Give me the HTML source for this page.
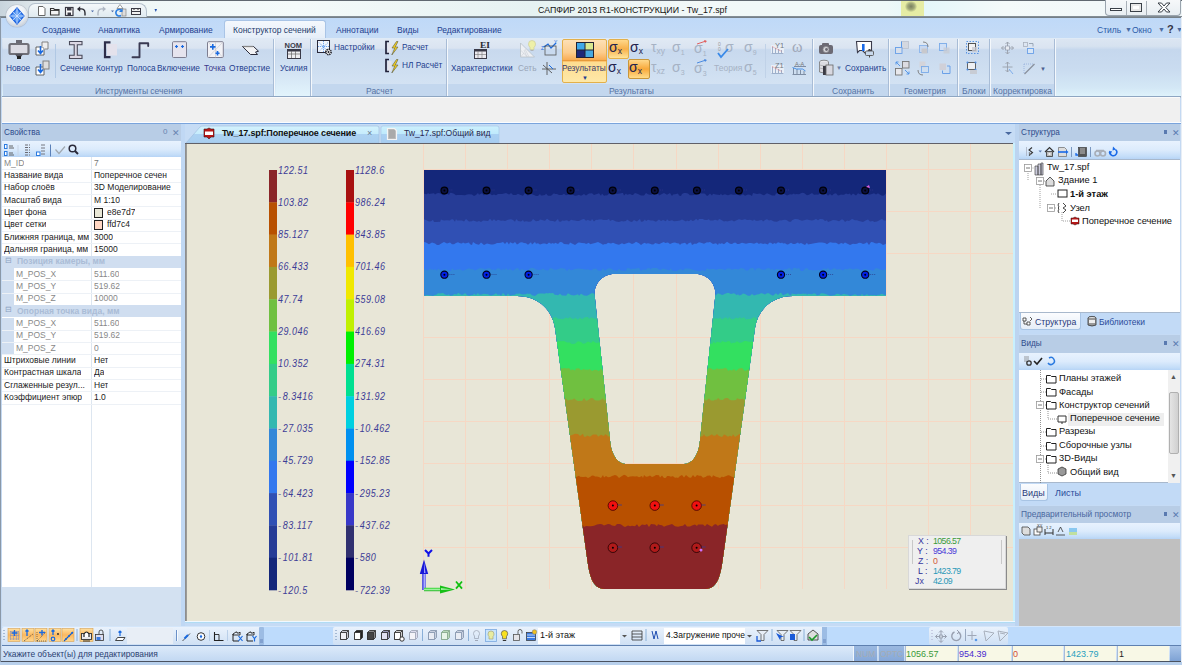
<!DOCTYPE html>
<html><head><meta charset="utf-8">
<style>
*{margin:0;padding:0;box-sizing:border-box}
html,body{width:1182px;height:665px;overflow:hidden;background:#c4d9f2;font-family:"Liberation Sans",sans-serif;font-size:10px;color:#1e3e8e}
.a{position:absolute}
.t{position:absolute;white-space:nowrap;line-height:1}
.rl{position:absolute;white-space:nowrap;line-height:1;font-size:8.3px;color:#1f3f8f}
.gl{position:absolute;white-space:nowrap;line-height:1;font-size:8.5px;color:#5673a4}
.grp{position:absolute;top:39px;height:57px;background:linear-gradient(#e0e9f4 0%,#dae4f1 16%,#c8d9ee 19%,#cfdff1 60%,#d8e6f5 100%);border-right:1px solid #a8bcd6;box-shadow:1px 0 0 #f4f8fc}
.grp .lb{position:absolute;left:0;right:0;bottom:0;height:12px;background:#c3d7ee}
.sep{position:absolute;width:1px;background:#b0c8e4}
.pr{position:absolute;left:2px;width:179px;height:12.3px;border-bottom:1px solid #e8eef6}
.pt{position:absolute;white-space:nowrap;line-height:1;font-size:8.5px;color:#101010}
.sc{position:absolute;white-space:nowrap;line-height:1;font-size:11px;font-style:italic;color:#3c3c96;letter-spacing:0.6px;transform:scaleX(0.82);transform-origin:0 50%}
</style></head><body>
<!-- TITLE BAR -->
<div class="a" style="left:0;top:0;width:1182px;height:18px;background:linear-gradient(90deg,#c8d4dc 0%,#dfe8ec 3%,#eef6f6 8%,#f4fafa 25%,#e6f2f2 45%,#f2f8f8 60%,#eef8f8 75%,#e4f6fa 78%,#f4fafa 85%,#f0f6f8 100%)"></div>
<div class="a" style="left:0;top:0;width:1182px;height:1px;background:#606870"></div>
<div class="a" style="left:901px;top:1px;width:23px;height:15px;background:#e6eca4"></div>
<div class="a" style="left:905px;top:1px;width:12px;height:11px;border-radius:50%;background:radial-gradient(#7a8060 0%,#a0a878 40%,rgba(230,236,164,0) 75%)"></div>
<div class="a" style="left:0;top:16px;width:1182px;height:2px;background:linear-gradient(#8a949c,#6e7880)"></div>
<div class="t" style="left:538px;top:6px;font-size:8.8px;color:#151515">САПФИР 2013 R1-КОНСТРУКЦИИ - Tw_17.spf</div>
<!-- QAT -->
<div class="a" style="left:28px;top:3px;width:119px;height:14px;border:1px solid #b4c0cc;border-bottom:none;border-radius:7px 8px 0 0;background:linear-gradient(#f4f8fa,#e0eaf0)"></div>
<svg class="a" style="left:36px;top:3px" width="130" height="14" viewBox="0 0 130 14">
 <path d="M2.5 3.5h4.5l2 2v7h-6.5z" fill="#fff" stroke="#666" stroke-width="1"/>
 <path d="M14.5 5.5h3l1 1h4.5v5.5h-8.5z" fill="#f4f4f4" stroke="#333" stroke-width="1.1"/><path d="M15 7.5h8" stroke="#333" stroke-width="0.9"/>
 <rect x="29.5" y="4.5" width="7.5" height="8" fill="#fff" stroke="#3a3a44" stroke-width="1.2"/><rect x="31" y="4.5" width="4.5" height="3" fill="#3a3a44"/><rect x="31.5" y="9.5" width="3.5" height="3" fill="#3a3a44"/>
 <path d="M43.5 6q5.5-1 5.5 4v2.5" fill="none" stroke="#2a2a32" stroke-width="1.4"/><path d="M41 6l3.2-2.8v5.6z" fill="#2a2a32"/>
 <path d="M55 7.5h3l-1.5 1.8z" fill="#4a6aa8"/>
 <path d="M67.5 6q-5.5-1-5.5 4v2.5" fill="none" stroke="#b0b8c4" stroke-width="1.4"/><path d="M70 6l-3.2-2.8v5.6z" fill="#b0b8c4"/>
 <path d="M75 7.5h3l-1.5 1.8z" fill="#4a6aa8"/>
 <path d="M84 1.5l3 4h-6z" fill="#fff" stroke="#777" stroke-width="0.7"/><rect x="86" y="6" width="4" height="7" fill="#ddd" stroke="#777" stroke-width="0.6"/>
 <path d="M86 8a3.3 3.3 0 1 0 -1 4.5" fill="none" stroke="#2a7de0" stroke-width="1.6"/><path d="M86.5 5.5v3.5h-3.5z" fill="#2a7de0"/>
 <rect x="95.5" y="5.5" width="9" height="6" fill="#f0f0f0" stroke="#3a3a44" stroke-width="1"/><path d="M96 8.5h8" stroke="#3a3a44" stroke-width="1"/><path d="M97 6.5h2M101 6.5h2" stroke="#777" stroke-width="0.8"/>
 <path d="M118.5 6h2.5l-1.2 3z" fill="#1e4eae"/>
</svg>

<!-- TAB ROW -->
<div class="a" style="left:2px;top:18px;width:1178px;height:21px;background:linear-gradient(#bfd9f8,#c6dcf6)"></div>
<div class="rl" style="left:42px;top:26px;font-size:8.5px">Создание</div>
<div class="rl" style="left:98px;top:26px;font-size:8.5px">Аналитика</div>
<div class="rl" style="left:159px;top:26px;font-size:8.5px">Армирование</div>
<div class="a" style="left:224px;top:20px;width:102px;height:20px;border:1px solid #a9c4e6;border-bottom:none;border-radius:3px 3px 0 0;background:linear-gradient(#f4f8fd,#e4edf8)"></div>
<div class="rl" style="left:233px;top:26px;font-size:8.5px;color:#243c6c">Конструктор сечений</div>
<div class="rl" style="left:336px;top:26px;font-size:8.5px">Аннотации</div>
<div class="rl" style="left:397px;top:26px;font-size:8.5px">Виды</div>
<div class="rl" style="left:437px;top:26px;font-size:8.5px">Редактирование</div>
<div class="rl" style="left:1097px;top:26px;font-size:8.5px;color:#2a5aa8">Стиль</div>
<div class="t" style="left:1125px;top:26px;font-size:7px;color:#4a6aa0">▼</div>
<div class="rl" style="left:1132px;top:26px;font-size:8.5px;color:#2a5aa8">Окно</div>
<div class="t" style="left:1158px;top:26px;font-size:7px;color:#4a6aa0">▼</div>
<div class="t" style="left:1167px;top:24px;font-size:11px;font-weight:bold;color:#334">?</div>
<div class="t" style="left:1176px;top:26px;font-size:7px;color:#4a6aa0">▼</div>
<!-- App button -->
<div class="a" style="left:6px;top:5px;width:22px;height:22px;border-radius:50%;background:radial-gradient(circle at 45% 35%,#ffffff 0%,#eef2f6 45%,#c4ccd6 80%,#9aa4b0 100%);box-shadow:0 0 1px #667"></div>
<svg class="a" style="left:9px;top:7px" width="16" height="18" viewBox="0 0 16 18">
 <path d="M8 1L15 9L8 17L1 9Z" fill="#5a9af4" stroke="#1a62e0" stroke-width="1.2"/>
 <path d="M8 1V17M1 9H15M4 5L12 13M12 5L4 13" stroke="#e0ecff" stroke-width="0.7"/>
</svg>
<!-- window buttons -->
<div class="a" style="left:1105px;top:0;width:76px;height:16px;border:1px solid #9aa4ae;border-top:none;border-radius:0 0 4px 4px;background:linear-gradient(#f6f8fa,#e8eef2)"></div>
<div class="a" style="left:1126px;top:1px;width:1px;height:14px;background:#a8b0b8"></div>
<div class="a" style="left:1146px;top:1px;width:1px;height:14px;background:#a8b0b8"></div>
<div class="a" style="left:1110px;top:8px;width:12px;height:3px;background:#fff;border:1px solid #3a4048"></div>
<div class="a" style="left:1130px;top:3px;width:12px;height:9px;background:#fff;border:1px solid #3a4048;box-shadow:inset 0 0 0 2px #e8e8e8"></div>
<svg class="a" style="left:1157px;top:2px" width="14" height="11" viewBox="0 0 14 11"><path d="M1 1h3.5l2.5 3 2.5-3h3.5l-4.2 4.5 4.2 4.5h-3.5l-2.5-3-2.5 3h-3.5l4.2-4.5z" fill="#fff" stroke="#3a4048" stroke-width="1"/></svg>
<!-- RIBBON BODY -->
<div class="a" style="left:2px;top:38px;width:1179px;height:59px;background:linear-gradient(#dce6f2 0%,#d6e2f0 14%,#c5d7ed 20%,#cadcf0 55%,#d4e8f6 85%,#e0f4fc 100%)"></div>
<div class="a" style="left:2px;top:38px;width:1178px;height:1px;background:#dfeaf6"></div>
<div class="grp" style="left:3px;width:271px"><div class="lb"></div></div>
<div class="grp" style="left:276px;width:35px;background:linear-gradient(#e2eaf5 0%,#dae4f1 16%,#c8d9ee 19%,#d4e4f4 60%,#e2f4fc 100%)"></div>
<div class="grp" style="left:312px;width:135px"><div class="lb"></div></div>
<div class="grp" style="left:448px;width:365px"><div class="lb"></div></div>
<div class="grp" style="left:814px;width:75px"><div class="lb"></div></div>
<div class="grp" style="left:890px;width:68px"><div class="lb"></div></div>
<div class="grp" style="left:959px;width:31px"><div class="lb"></div></div>
<div class="grp" style="left:991px;width:64px"><div class="lb"></div></div>
<div class="a" style="left:2px;top:96px;width:1179px;height:1px;background:#8ea6c2"></div>
<div class="a" style="left:2px;top:97px;width:1179px;height:1px;background:#b4c4d6"></div>
<div class="gl" style="left:95px;top:86.5px">Инструменты сечения</div>
<div class="gl" style="left:366px;top:86.5px">Расчет</div>
<div class="gl" style="left:609px;top:86.5px">Результаты</div>
<div class="gl" style="left:832px;top:86.5px">Сохранить</div>
<div class="gl" style="left:904px;top:86.5px">Геометрия</div>
<div class="gl" style="left:962px;top:86.5px">Блоки</div>
<div class="gl" style="left:993px;top:86.5px">Корректировка</div>
<!-- group 1 labels -->
<div class="rl" style="left:6px;top:64px">Новое</div>
<div class="sep" style="left:55px;top:44px;height:34px"></div>
<div class="rl" style="left:60px;top:64px">Сечение</div>
<div class="rl" style="left:96px;top:64px">Контур</div>
<div class="rl" style="left:127px;top:64px">Полоса</div>
<div class="rl" style="left:157px;top:64px">Включение</div>
<div class="rl" style="left:204px;top:64px;color:#3a3a8a">Точка</div>
<div class="rl" style="left:229px;top:64px">Отверстие</div>
<div class="rl" style="left:280px;top:64px">Усилия</div>
<svg class="a" style="left:0;top:38px" width="320" height="46" viewBox="0 38 320 46">
 <!-- Новое icon -->
 <rect x="16" y="40" width="6" height="4" fill="#6a6a74"/>
 <rect x="9.5" y="44" width="19" height="10" rx="1.5" fill="#dcdce4" stroke="#707078" stroke-width="2.2"/>
 <path d="M15 54h8l-1.5 2.5h-5z" fill="#55555e"/><rect x="17" y="56" width="4" height="3" fill="#222"/>
 <!-- small icons -->
 <path d="M36 47h8v8h-8z" fill="#fff" stroke="#555" stroke-width="0.9"/><path d="M42 46v-4h6v7h-3" fill="#eee" stroke="#777" stroke-width="0.9"/><path d="M40.5 46v7m-2.5-2.5l2.5 3 2.5-3" stroke="#1a6ae0" stroke-width="1.6" fill="none"/>
 <path d="M36 67h8v8h-8z" fill="#fff" stroke="#555" stroke-width="0.9"/><rect x="43" y="61" width="6" height="8" fill="#ddd" stroke="#777" stroke-width="0.9"/><path d="M40.5 64v8m-2.5-2.5l2.5 3 2.5-3" stroke="#1a6ae0" stroke-width="1.6" fill="none"/>
 <!-- Сечение I-beam -->
 <path d="M69.5 41.5h12.5v3.2h-4.7v10.6h4.7v3.2h-12.5v-3.2h4.7v-10.6h-4.7z" fill="#dcd8e4" stroke="#4a4a5a" stroke-width="1.1"/>
 <!-- Контур [ -->
 <rect x="107" y="44" width="10" height="11.5" fill="#e4e2ec"/>
 <path d="M110.5 42.3h-5.5v14.8h5.5" fill="none" stroke="#2e2e4a" stroke-width="2.2"/>
 <!-- Полоса -->
 <path d="M132.5 57.2H139.5V43.2H148.2V46" fill="none" stroke="#3a3a52" stroke-width="1.9" stroke-linejoin="round" stroke-linecap="round"/>
 <!-- Включение -->
 <rect x="172.5" y="41.7" width="14" height="15.8" rx="1" fill="#e6e4ee" stroke="#7e7e90" stroke-width="1"/>
 <path d="M175 46.5h3M176.5 45v3M181 46.5h3M182.5 45v3" stroke="#1a6ae0" stroke-width="1.2"/>
 <!-- Точка -->
 <rect x="207.5" y="41.7" width="15.8" height="15.8" rx="1" fill="#f2f2f6" stroke="#7e7e90" stroke-width="1"/>
 <path d="M208 42l15 15.5M223 42l-15 15.5M215.5 42v15.5" stroke="#c4c4cc" stroke-width="0.6"/>
 <path d="M210 46.9h5.5M212.8 44v5.8M215.5 53.2h4M217.5 51v4.5" stroke="#1a6ae0" stroke-width="1.6"/>
 <!-- Отверстие -->
 <path d="M242.5 46.5H253.5L258.5 51.2L255.5 52L257.5 54.5H250.5Z" fill="#f2f2f4" stroke="#2a2a38" stroke-width="1"/>
 <path d="M243 46.5H253" stroke="#888" stroke-width="1.3"/>
 <!-- NOM -->
 <text x="284.5" y="47.5" font-size="7.5" font-family="Liberation Sans" font-weight="bold" fill="#3a3a48" textLength="17.5" lengthAdjust="spacingAndGlyphs">NOM</text>
 <rect x="287.5" y="49.5" width="13" height="9" fill="#eeeef2" stroke="#3a3a48" stroke-width="1"/><rect x="287.5" y="49.5" width="13" height="2" fill="#3a3a48"/><path d="M288 54h12M291.5 51v7M295.5 51v7" stroke="#666" stroke-width="0.7"/>
</svg>
<!-- Group Расчет / Результаты etc. -->
<div class="rl" style="left:334px;top:43px">Настройки</div>
<div class="rl" style="left:402px;top:43px">Расчет</div>
<div class="rl" style="left:402px;top:61px">НЛ Расчёт</div>
<div class="rl" style="left:451px;top:64px">Характеристики</div>
<div class="rl" style="left:518px;top:64px;color:#9aa6b8">Сеть</div>
<!-- Результаты big button -->
<div class="a" style="left:562px;top:39px;width:45px;height:44px;border:1px solid #e3b04a;border-radius:2px;background:linear-gradient(#fde0b6 0%,#fccc8c 30%,#f9ab52 48%,#f8a040 50%,#fddc90 52%,#fee8a8 100%)"></div>
<div class="a" style="left:562px;top:60px;width:45px;height:1px;background:#e89a3a"></div>
<svg class="a" style="left:575px;top:41px" width="20" height="18" viewBox="0 0 20 18">
 <rect x="1" y="1" width="18" height="16" fill="#223"/>
 <rect x="2" y="2" width="7.5" height="6.5" fill="#40a8e8"/><rect x="10.5" y="2" width="7.5" height="6.5" fill="#d8e890"/>
 <rect x="2" y="9.5" width="7.5" height="6.5" fill="#202878"/><rect x="10.5" y="9.5" width="7.5" height="6.5" fill="#48a8e0"/>
</svg>
<div class="rl" style="left:562px;top:64px;color:#3a3a6a;font-size:8.3px">Результаты</div>
<div class="t" style="left:582px;top:75px;font-size:6px;color:#1e3e8e">▼</div>
<!-- sigma buttons -->
<div class="a" style="left:608px;top:39px;width:21px;height:20px;border:1px solid #e3b04a;border-radius:2px;background:linear-gradient(#ffd88a,#f8b04a 50%,#ffe49a)"></div>
<div class="a" style="left:628px;top:59px;width:22px;height:20px;border:1px solid #c8963a;border-radius:2px;background:linear-gradient(#ffd88a,#f8a83a 50%,#ffdc8a)"></div>
<div class="t" style="left:609px;top:40px;font-size:14px;color:#22224e">σ<span style="font-size:8.5px;position:relative;top:2px">x</span></div>
<div class="t" style="left:630px;top:40px;font-size:14px;color:#22224e">σ<span style="font-size:8.5px;position:relative;top:2px">x</span></div>
<div class="t" style="left:608px;top:59.5px;font-size:14px;color:#22224e">σ<span style="font-size:8.5px;position:relative;top:2px">x</span></div>
<div class="t" style="left:629px;top:59.5px;font-size:14px;color:#22224e">σ<span style="font-size:8.5px;position:relative;top:2px">x</span></div>
<div class="t" style="left:651px;top:40px;font-size:14px;color:#a6b2c4">τ<span style="font-size:8.5px;position:relative;top:2px">xy</span></div>
<div class="t" style="left:651px;top:59.5px;font-size:14px;color:#a6b2c4">τ<span style="font-size:8.5px;position:relative;top:2px">xz</span></div>
<div class="t" style="left:672px;top:40px;font-size:14px;color:#a6b2c4">σ<span style="font-size:7px;position:relative;top:3px">1</span></div>
<div class="t" style="left:672px;top:59.5px;font-size:14px;color:#a6b2c4">σ<span style="font-size:7px;position:relative;top:3px">3</span></div>
<div class="t" style="left:694px;top:41px;font-size:14px;color:#a6b2c4">σ<span style="font-size:7px;position:relative;top:3px">1</span></div>
<div class="t" style="left:694px;top:60.5px;font-size:14px;color:#a6b2c4">σ<span style="font-size:7px;position:relative;top:3px">3</span></div>
<svg class="a" style="left:694px;top:38px" width="16" height="30" viewBox="0 0 16 30"><path d="M3 6l9-3" stroke="#e06060" stroke-width="1"/><path d="M10 2l3 1-2 2z" fill="#e06060"/><path d="M3 25l9-3" stroke="#4a8ae0" stroke-width="1"/><path d="M10 21l3 1-2 2z" fill="#4a8ae0"/></svg>
<div class="t" style="left:725px;top:40px;font-size:14px;color:#a6b2c4">σ<span style="font-size:10px;position:relative;top:2px"></span></div>
<svg class="a" style="left:716px;top:40px" width="14" height="20" viewBox="0 0 14 20"><text x="2" y="6" font-size="5" fill="#999" font-family="Liberation Sans">0</text><text x="2" y="11" font-size="5" fill="#999" font-family="Liberation Sans">0</text><path d="M2 13l3 4 7-8" fill="none" stroke="#3a8ae8" stroke-width="1.8"/></svg>
<div class="t" style="left:714px;top:64px;font-size:8.5px;color:#a6b2c4">Теория</div>
<div class="t" style="left:744px;top:40px;font-size:14px;color:#a6b2c4">σ<span style="font-size:7px;position:relative;top:3px">9</span></div>
<div class="t" style="left:744px;top:59.5px;font-size:14px;color:#a6b2c4">σ<span style="font-size:7px;position:relative;top:3px">5</span></div>
<div class="sep" style="left:765px;top:44px;height:34px;background:#c0d2e8"></div>
<svg class="a" style="left:445px;top:39px" width="370" height="44" viewBox="445 39 370 44">
 <!-- Характеристики EI -->
 <text x="480" y="48" font-size="8.5" font-family="Liberation Serif" font-weight="bold" fill="#2a2a30" textLength="10" lengthAdjust="spacingAndGlyphs">EI</text>
 <rect x="474.5" y="49.5" width="12" height="9" fill="#eceaf0" stroke="#3a3a48" stroke-width="1"/><rect x="474.5" y="49.5" width="12" height="2" fill="#3a3a48"/><path d="M475 54.5h11M478 51v7M482 51v7" stroke="#777" stroke-width="0.6"/>
 <!-- Сеть -->
 <path d="M520.5 43v14h14z" fill="#eef0f4" stroke="#b8c0c8" stroke-width="0.8"/><path d="M520.5 50l7 7M524 53l-3.5 4M527 57l-3-7M529 57l-4 -8" stroke="#c8ccd4" stroke-width="0.6"/>
 <path d="M532 40.5a3.5 3.5 0 0 1 3.5 3.5q0 2-1.5 3.5v2h-4v-2q-1.5-1.5-1.5-3.5a3.5 3.5 0 0 1 3.5-3.5z" fill="#eef0a8" stroke="#c8c890" stroke-width="0.6"/><path d="M530.5 50.5h3" stroke="#aaa" stroke-width="0.8"/>
 <!-- xyz icons -->
 <path d="M544 47l4 -3 3 4 5 -5" fill="none" stroke="#1a6ae0" stroke-width="1.2"/><rect x="545" y="46" width="11" height="9" fill="none" stroke="#555" stroke-width="0.8"/>
 <text x="554" y="44" font-size="5" fill="#1a6ae0">Y</text><text x="541" y="50" font-size="5" fill="#1a6ae0">Z</text>
 <path d="M547 62v13M542 69h14M543 65l9 8" stroke="#555" stroke-width="0.9" fill="none"/><path d="M549 65l4 4" stroke="#1a6ae0" stroke-width="1"/>
 <!-- Y1 Z1 omega -->
 <rect x="771" y="45" width="13" height="9" fill="#e8eef6"/><path d="M772.5 53v-6M775.5 53v-5M778.5 53v-4M781.5 53v-3M771.5 53.5h12" stroke="#8aa0c0" stroke-width="0.8"/><path d="M772 46.5l10 5" stroke="#e07070" stroke-width="0.7" stroke-dasharray="1 0.6"/>
 <text x="775" y="47.5" font-size="7.5" font-family="Liberation Sans" fill="#707880">Y1</text>
 <rect x="771" y="65" width="13" height="9" fill="#e8eef6"/><path d="M772.5 73v-6M775.5 73v-5M778.5 73v-4M781.5 73v-3M771.5 73.5h12" stroke="#8aa0c0" stroke-width="0.8"/><path d="M772 66.5l10 5" stroke="#e07070" stroke-width="0.7" stroke-dasharray="1 0.6"/>
 <text x="775" y="67.5" font-size="7.5" font-family="Liberation Sans" fill="#707880">Z1</text>
 <text x="795" y="66" font-size="5.5" font-family="Liberation Sans" fill="#777">A-A</text><path d="M794 66.5h12M792.5 74.5h13.5M793.5 68v6M797 69v5M800.5 70v4M804 71v3" stroke="#6a7890" stroke-width="0.8"/><path d="M792.5 67.5l4 1.5h6l3 2" fill="none" stroke="#3a8ae8" stroke-width="0.9"/>
 <text x="792" y="52" font-size="16" font-family="Liberation Serif" fill="#a0a8b8">ω</text>
</svg>
<svg class="a" style="left:310px;top:39px" width="100" height="44" viewBox="310 39 100 44">
 <!-- Настройки icon -->
 <rect x="317.5" y="40.5" width="12" height="12" fill="#f2f6fc" stroke="#2a2a3a" stroke-width="1"/>
 <path d="M319 42.5l9 9M328 42.5l-9 9M323.5 41v11M318 46.5h11" stroke="#4a90ee" stroke-width="0.8" stroke-dasharray="1.2 0.8"/>
 <circle cx="328.5" cy="52" r="2.6" fill="#fff" stroke="#1a1a22" stroke-width="1.6" stroke-dasharray="1.3 0.7"/><circle cx="328.5" cy="52" r="1" fill="#1a1a22"/>
 <!-- Расчет icons -->
 <rect x="387.5" y="43" width="4" height="10" fill="#e4e4ec"/><path d="M389 41.5h-3v12h3" fill="none" stroke="#22223a" stroke-width="1.7"/>
 <path d="M396.5 41.5l-4.5 6.5h2.8l-3 7 6.2-8h-2.8l2.8-5.5z" fill="#f4d020" stroke="#5a5a40" stroke-width="0.6"/>
 <rect x="387.5" y="61" width="4" height="10" fill="#e4e4ec"/><path d="M389 59.5h-3v12h3" fill="none" stroke="#22223a" stroke-width="1.7"/>
 <path d="M396.5 59.5l-4.5 6.5h2.8l-3 7 6.2-8h-2.8l2.8-5.5z" fill="#f4d020" stroke="#5a5a40" stroke-width="0.6"/>
</svg>
<!-- Сохранить group -->
<div class="rl" style="left:845px;top:64px">Сохранить</div>
<div class="t" style="left:836px;top:65px;font-size:6px;color:#6a80a8">▼</div>
<svg class="a" style="left:814px;top:39px" width="250" height="44" viewBox="814 39 250 44">
 <rect x="819" y="45" width="14" height="9" rx="2" fill="#6c6a74"/><rect x="822" y="43" width="7" height="3" rx="1" fill="#6c6a74"/><circle cx="826" cy="49.5" r="3" fill="#d8d8dc" stroke="#8a8a90" stroke-width="0.8"/><circle cx="826.5" cy="49.5" r="1.4" fill="#6c6a74"/>
 <path d="M856.5 41.5h15v9h-3l-3 3-3-3h-3l-2 2z" fill="#fff" stroke="#3a3a4a" stroke-width="1.1"/><rect x="862" y="44" width="2.6" height="7" fill="#1a6ae8"/>
 <rect x="865.5" y="51" width="8" height="4.5" rx="1" fill="#c8d8ec" stroke="#555" stroke-width="0.9"/><path d="M868.5 49.5h2M869.5 55.5v2" stroke="#444" stroke-width="1"/>
 <ellipse cx="824" cy="62" rx="4.5" ry="1.8" fill="#e8e8ec" stroke="#777" stroke-width="0.8"/><path d="M819.5 62v10q4.5 2 9 0v-10" fill="#dcdce2" stroke="#777" stroke-width="0.8"/><path d="M819.5 65q4.5 2 9 0M819.5 68q4.5 2 9 0" fill="none" stroke="#999" stroke-width="0.6"/>
 <rect x="823" y="66" width="4" height="9" fill="#3a3a44"/><rect x="826" y="65" width="7" height="10" fill="#d8d8e0" stroke="#666" stroke-width="0.8"/>
 <!-- geometry -->
 <rect x="901.5" y="41.5" width="7" height="7" fill="#d4d8e0" stroke="#b8c0cc" stroke-width="0.8"/>
 <path d="M895.5 53.5v-6h6v-6h0" fill="none" stroke="#5a9ae8" stroke-width="1"/><rect x="895.5" y="47.5" width="6.5" height="6" fill="#d8e0ec" stroke="#6aa0e8" stroke-width="0.9"/>
 <rect x="919.5" y="45.5" width="8" height="7" fill="#c8d8f0" stroke="#8ab4ec" stroke-width="0.9"/><rect x="921.5" y="48.5" width="6" height="5" fill="#c8c8cc"/><path d="M923 42q5 0 5 5" fill="none" stroke="#777" stroke-width="0.9"/>
 <rect x="939.5" y="43.5" width="7" height="7" fill="#d0e0f6" stroke="#7aaae8" stroke-width="0.9"/><rect x="943.5" y="47.5" width="6" height="6" fill="#c8ccd4" opacity="0.8"/>
 <rect x="902.5" y="61.5" width="6.5" height="6.5" fill="#dcdce2" stroke="#777" stroke-width="0.9"/><rect x="895.5" y="68.5" width="6.5" height="6.5" fill="#e8e8ec" stroke="#777" stroke-width="0.9"/>
 <path d="M896 62l4 4M905 70l4 4" stroke="#4a90e8" stroke-width="0.9"/><path d="M896 62h2.5M896 62v2.5M909 74h-2.5M909 74v-2.5" stroke="#4a90e8" stroke-width="0.9"/>
 <rect x="919.5" y="61.5" width="6" height="6" fill="#d4d4da"/><rect x="921.5" y="66.5" width="7" height="6" fill="none" stroke="#7aaae8" stroke-width="0.9"/><path d="M918 70q0 5 5 5" fill="none" stroke="#777" stroke-width="0.9"/>
 <rect x="939.5" y="63.5" width="6.5" height="6.5" fill="#d0d0d8"/><path d="M942.5 70.5v3h7.5v-7.5h-3" fill="none" stroke="#6aa0e8" stroke-width="1"/>
 <!-- blocks -->
 <rect x="966.5" y="41.5" width="12" height="12" fill="none" stroke="#4a8ae0" stroke-width="0.9" stroke-dasharray="1.5 1.5"/><rect x="968.5" y="43.5" width="7" height="7" fill="#f2f2f4" stroke="#444" stroke-width="0.9"/><rect x="972" y="47" width="5" height="5" fill="#c8c8d0" opacity="0.8"/>
 <rect x="967.5" y="62.5" width="8" height="7" fill="#eef0f4" stroke="#555" stroke-width="0.9"/><circle cx="967.5" cy="62.5" r="1" fill="#4a8ae0"/><circle cx="975.5" cy="62.5" r="1" fill="#4a8ae0"/><circle cx="967.5" cy="69.5" r="1" fill="#4a8ae0"/><circle cx="975.5" cy="69.5" r="1" fill="#4a8ae0"/><rect x="970" y="70" width="7" height="4" fill="#c8ccd4"/>
 <!-- correction -->
 <path d="M1007.5 42v12M1001.5 48h12" stroke="#9aa0ac" stroke-width="0.9"/><path d="M1005.5 44l2-2 2 2M1005.5 52l2 2 2-2M1003.5 46l-2 2 2 2M1011.5 46l2 2-2 2" fill="none" stroke="#9aa0ac" stroke-width="0.9"/><rect x="1005.5" y="46" width="4" height="4" fill="#e8ecf2" stroke="#8890a0" stroke-width="0.6"/>
 <rect x="1023.5" y="42.5" width="4" height="4" fill="none" stroke="#a8b0bc" stroke-width="0.8"/><rect x="1027.5" y="48.5" width="6" height="5" fill="#d8e6f6" stroke="#6aa0e8" stroke-width="0.9"/><path d="M1029 43.5h4v3" fill="none" stroke="#8a98a8" stroke-width="0.8"/>
 <path d="M1007.5 62v10M1002.5 67h10" stroke="#9aa0ac" stroke-width="0.9"/><path d="M1005.5 64l2-2 2 2M1005.5 70l2 2 2-2" fill="none" stroke="#9aa0ac" stroke-width="0.9"/><path d="M1009 69l4 5" stroke="#6aa0e8" stroke-width="0.8"/>
 <path d="M1024.5 74l10-10" stroke="#8a909c" stroke-width="1.2"/><path d="M1024 64v9M1024 64h9" fill="none" stroke="#8aa8d8" stroke-width="0.7" stroke-dasharray="1 1"/>
</svg>
<div class="t" style="left:1040px;top:66px;font-size:6px;color:#4a6090">▼</div>
<!-- GRAY STRIP -->
<div class="a" style="left:2px;top:97px;width:1178px;height:25px;background:#f0f0f0"></div>
<div class="a" style="left:2px;top:97px;width:1178px;height:1px;background:#fafafa"></div>


<!-- main bg between panels -->
<div class="a" style="left:2px;top:123px;width:1178px;height:504px;background:#c5dbf5"></div>

<!-- LEFT PANEL: Свойства -->
<div class="a" style="left:2px;top:123px;width:179px;height:504px;background:#d3e1f1"></div>
<div class="a" style="left:2px;top:123px;width:179px;height:18px;background:#b8cde6"></div>
<div class="t" style="left:4px;top:128.5px;font-size:8.2px;color:#2e4c8c">Свойства</div>
<div class="t" style="left:163px;top:128px;font-size:8px;color:#6a84b0">0</div>
<div class="t" style="left:172px;top:128.5px;font-size:9px;color:#6a84b0">✕</div>
<div class="a" style="left:2px;top:141px;width:179px;height:16px;background:linear-gradient(#e8f2fe 0%,#dcebfc 50%,#c4ddf8 85%,#b6d4f6 100%)"></div>
<svg class="a" style="left:0px;top:141px" width="82" height="17" viewBox="0 141 82 17">
 <rect x="4.5" y="144.5" width="2.5" height="4" fill="#fff" stroke="#2a7ae0" stroke-width="1"/><rect x="4.5" y="151.5" width="2.5" height="4" fill="#fff" stroke="#2a7ae0" stroke-width="1"/>
 <path d="M9 146h4M9 148h5M9 153h4M9 155h5" stroke="#555" stroke-width="0.9"/>
 <path d="M18 145v11" stroke="#c8d4e4"/>
 <path d="M25 145h5M25 147.5h5M25 150h5M25 152.5h5M25 155h5" stroke="#6a6a72" stroke-width="1" stroke-dasharray="3 1"/>
 <rect x="36.5" y="152" width="3.5" height="3.5" fill="#fff" stroke="#2a7ae0" stroke-width="1"/><path d="M41 145h4M41 148h4M41 151h4M41 154h4" stroke="#6a6a72" stroke-width="0.9"/>
 <path d="M50.5 144.5v12" stroke="#5a80b8" stroke-width="1"/>
 <path d="M55.5 149.5l3.5 4 6-7" fill="none" stroke="#a0a8b0" stroke-width="1.2"/>
 <circle cx="72.5" cy="148.5" r="3.3" fill="none" stroke="#2a2a3a" stroke-width="1.5"/><path d="M75 151l3 3" stroke="#2a2a3a" stroke-width="2"/>
</svg>
<div class="a" style="left:2px;top:157px;width:179px;height:430px;background:#fff"></div>
<div class="a" style="left:91px;top:157px;width:1px;height:430px;background:#dde6f0"></div>
<div class="a" style="left:2px;top:169.4px;width:179px;height:1px;background:#edf1f6"></div>
<div class="pt" style="left:4px;top:158.7px;color:#888;max-width:85px;overflow:hidden;padding-bottom:2px">M_ID</div>
<div class="pt" style="left:94px;top:158.7px;color:#777;max-width:86px;overflow:hidden;padding-bottom:2px">7</div>
<div class="a" style="left:2px;top:181.7px;width:179px;height:1px;background:#edf1f6"></div>
<div class="pt" style="left:4px;top:171.0px;color:#1a1a1a;max-width:85px;overflow:hidden;padding-bottom:2px">Название вида</div>
<div class="pt" style="left:94px;top:171.0px;color:#1a1a1a;max-width:86px;overflow:hidden;padding-bottom:2px">Поперечное сечен</div>
<div class="a" style="left:2px;top:194.1px;width:179px;height:1px;background:#edf1f6"></div>
<div class="pt" style="left:4px;top:183.4px;color:#1a1a1a;max-width:85px;overflow:hidden;padding-bottom:2px">Набор слоёв</div>
<div class="pt" style="left:94px;top:183.4px;color:#1a1a1a;max-width:86px;overflow:hidden;padding-bottom:2px">3D Моделирование</div>
<div class="a" style="left:2px;top:206.4px;width:179px;height:1px;background:#edf1f6"></div>
<div class="pt" style="left:4px;top:195.7px;color:#1a1a1a;max-width:85px;overflow:hidden;padding-bottom:2px">Масштаб вида</div>
<div class="pt" style="left:94px;top:195.7px;color:#1a1a1a;max-width:86px;overflow:hidden;padding-bottom:2px">М 1:10</div>
<div class="a" style="left:2px;top:218.7px;width:179px;height:1px;background:#edf1f6"></div>
<div class="pt" style="left:4px;top:208.0px;color:#1a1a1a;max-width:85px;overflow:hidden;padding-bottom:2px">Цвет фона</div>
<div class="a" style="left:94px;top:207.6px;width:9px;height:10px;background:#e8e7d7;border:1px solid #222"></div>
<div class="pt" style="left:107px;top:208.0px;color:#1a1a1a;max-width:73px;overflow:hidden;padding-bottom:2px">e8e7d7</div>
<div class="a" style="left:2px;top:231.1px;width:179px;height:1px;background:#edf1f6"></div>
<div class="pt" style="left:4px;top:220.4px;color:#1a1a1a;max-width:85px;overflow:hidden;padding-bottom:2px">Цвет сетки</div>
<div class="a" style="left:94px;top:220.0px;width:9px;height:10px;background:#ffd7c4;border:1px solid #222"></div>
<div class="pt" style="left:107px;top:220.4px;color:#1a1a1a;max-width:73px;overflow:hidden;padding-bottom:2px">ffd7c4</div>
<div class="a" style="left:2px;top:243.4px;width:179px;height:1px;background:#edf1f6"></div>
<div class="pt" style="left:4px;top:232.7px;color:#1a1a1a;max-width:85px;overflow:hidden;padding-bottom:2px">Ближняя граница, мм</div>
<div class="pt" style="left:94px;top:232.7px;color:#1a1a1a;max-width:86px;overflow:hidden;padding-bottom:2px">3000</div>
<div class="a" style="left:2px;top:255.7px;width:179px;height:1px;background:#edf1f6"></div>
<div class="pt" style="left:4px;top:245.0px;color:#1a1a1a;max-width:85px;overflow:hidden;padding-bottom:2px">Дальняя граница, мм</div>
<div class="pt" style="left:94px;top:245.0px;color:#1a1a1a;max-width:86px;overflow:hidden;padding-bottom:2px">15000</div>
<div class="a" style="left:2px;top:255.8px;width:179px;height:12.3px;background:#d0def0"></div>
<div class="t" style="left:5px;top:257.0px;font-size:8px;color:#8aa0c0">⊟</div>
<div class="t" style="left:17px;top:257.3px;font-size:8.5px;font-weight:bold;color:#aabcd6">Позиция камеры, мм</div>
<div class="a" style="left:2px;top:268.1px;width:12px;height:37px;background:#d0def0"></div>
<div class="a" style="left:2px;top:280.4px;width:179px;height:1px;background:#edf1f6"></div>
<div class="pt" style="left:16px;top:269.7px;color:#888;max-width:73px;overflow:hidden;padding-bottom:2px">M_POS_X</div>
<div class="pt" style="left:94px;top:269.7px;color:#888;max-width:86px;overflow:hidden;padding-bottom:2px">511.60</div>
<div class="a" style="left:2px;top:292.7px;width:179px;height:1px;background:#edf1f6"></div>
<div class="pt" style="left:16px;top:282.0px;color:#888;max-width:73px;overflow:hidden;padding-bottom:2px">M_POS_Y</div>
<div class="pt" style="left:94px;top:282.0px;color:#888;max-width:86px;overflow:hidden;padding-bottom:2px">519.62</div>
<div class="a" style="left:2px;top:305.0px;width:179px;height:1px;background:#edf1f6"></div>
<div class="pt" style="left:16px;top:294.3px;color:#888;max-width:73px;overflow:hidden;padding-bottom:2px">M_POS_Z</div>
<div class="pt" style="left:94px;top:294.3px;color:#888;max-width:86px;overflow:hidden;padding-bottom:2px">10000</div>
<div class="a" style="left:2px;top:305.2px;width:179px;height:12.3px;background:#d0def0"></div>
<div class="t" style="left:5px;top:306.4px;font-size:8px;color:#8aa0c0">⊟</div>
<div class="t" style="left:17px;top:306.7px;font-size:8.5px;font-weight:bold;color:#aabcd6">Опорная точка вида, мм</div>
<div class="a" style="left:2px;top:317.5px;width:12px;height:37px;background:#d0def0"></div>
<div class="a" style="left:2px;top:329.7px;width:179px;height:1px;background:#edf1f6"></div>
<div class="pt" style="left:16px;top:319.0px;color:#888;max-width:73px;overflow:hidden;padding-bottom:2px">M_POS_X</div>
<div class="pt" style="left:94px;top:319.0px;color:#888;max-width:86px;overflow:hidden;padding-bottom:2px">511.60</div>
<div class="a" style="left:2px;top:342.0px;width:179px;height:1px;background:#edf1f6"></div>
<div class="pt" style="left:16px;top:331.3px;color:#888;max-width:73px;overflow:hidden;padding-bottom:2px">M_POS_Y</div>
<div class="pt" style="left:94px;top:331.3px;color:#888;max-width:86px;overflow:hidden;padding-bottom:2px">519.62</div>
<div class="a" style="left:2px;top:354.4px;width:179px;height:1px;background:#edf1f6"></div>
<div class="pt" style="left:16px;top:343.6px;color:#888;max-width:73px;overflow:hidden;padding-bottom:2px">M_POS_Z</div>
<div class="pt" style="left:94px;top:343.6px;color:#888;max-width:86px;overflow:hidden;padding-bottom:2px">0</div>
<div class="a" style="left:2px;top:366.7px;width:179px;height:1px;background:#edf1f6"></div>
<div class="pt" style="left:4px;top:356.0px;color:#1a1a1a;max-width:85px;overflow:hidden;padding-bottom:2px">Штриховые линии</div>
<div class="pt" style="left:94px;top:356.0px;color:#1a1a1a;max-width:86px;overflow:hidden;padding-bottom:2px">Нет</div>
<div class="a" style="left:2px;top:379.0px;width:179px;height:1px;background:#edf1f6"></div>
<div class="pt" style="left:4px;top:368.3px;color:#1a1a1a;max-width:85px;overflow:hidden;padding-bottom:2px">Контрастная шкала</div>
<div class="pt" style="left:94px;top:368.3px;color:#1a1a1a;max-width:86px;overflow:hidden;padding-bottom:2px">Да</div>
<div class="a" style="left:2px;top:391.3px;width:179px;height:1px;background:#edf1f6"></div>
<div class="pt" style="left:4px;top:380.6px;color:#1a1a1a;max-width:85px;overflow:hidden;padding-bottom:2px">Сглаженные резул...</div>
<div class="pt" style="left:94px;top:380.6px;color:#1a1a1a;max-width:86px;overflow:hidden;padding-bottom:2px">Нет</div>
<div class="a" style="left:2px;top:403.7px;width:179px;height:1px;background:#edf1f6"></div>
<div class="pt" style="left:4px;top:393.0px;color:#1a1a1a;max-width:85px;overflow:hidden;padding-bottom:2px">Коэффициент эпюр</div>
<div class="pt" style="left:94px;top:393.0px;color:#1a1a1a;max-width:86px;overflow:hidden;padding-bottom:2px">1.0</div>
<!-- DOC AREA -->
<div class="a" style="left:181px;top:123px;width:4px;height:504px;background:#c0d8f4"></div>
<div class="a" style="left:185px;top:123px;width:830px;height:20px;background:#c6dcf5"></div>
<svg class="a" style="left:185px;top:123px" width="830" height="21" viewBox="185 123 830 21">
 <defs><linearGradient id="tg" x1="0" y1="0" x2="0" y2="1"><stop offset="0" stop-color="#d4f2fd"/><stop offset="0.45" stop-color="#c6ecfc"/><stop offset="0.5" stop-color="#acd2f2"/><stop offset="1" stop-color="#a8cef0"/></linearGradient>
 <linearGradient id="tg2" x1="0" y1="0" x2="0" y2="1"><stop offset="0" stop-color="#cdf0fd"/><stop offset="0.45" stop-color="#bfeafc"/><stop offset="0.5" stop-color="#a9d0f2"/><stop offset="1" stop-color="#a6ccf0"/></linearGradient></defs>
 <path d="M186 143 L200 127 Q201 126 203 126 H377 Q379 126 379 128 V143 Z" fill="url(#tg)" stroke="#a0c0e0" stroke-width="0.7"/>
 <path d="M381 143 V128 Q381 126 383 126 H497 Q499 126 499 128 V143 Z" fill="url(#tg2)" stroke="#a8c8e8" stroke-width="0.7"/>
 <path d="M1005 132 h7 l-3.5 3z" fill="#4a6aa0"/>
</svg>
<svg class="a" style="left:202px;top:127px" width="14" height="14" viewBox="0 0 14 14">
 <path d="M7 1 L9 2 H12 V10 H9 L7 12 L5 10 H2 V2 H5 Z" fill="#b81818" stroke="#401010" stroke-width="0.6"/>
 <rect x="3" y="4.5" width="8" height="3.5" fill="#fff"/>
</svg>
<div class="t" style="left:222px;top:129px;font-size:9px;font-weight:bold;color:#111;letter-spacing:-0.15px">Tw_17.spf:Поперечное сечение</div>
<div class="t" style="left:367px;top:129px;font-size:9px;color:#6a7a90">×</div>
<svg class="a" style="left:386px;top:127px" width="12" height="13" viewBox="0 0 12 13">
 <path d="M1.5 1.5h7l2 2v9h-9z" fill="#b8b8b8" stroke="#f4f4f4" stroke-width="1.2"/><path d="M3 4h6M3 6h6M3 8h6M3 10h6" stroke="#909090" stroke-width="0.7"/>
</svg>
<div class="t" style="left:404px;top:129px;font-size:8.6px;color:#2a2a50">Tw_17.spf:Общий вид</div>
<div class="a" style="left:1012px;top:143px;width:3px;height:480px;background:#c8f0fe"></div>
<div class="a" style="left:185px;top:621px;width:830px;height:1px;background:#f0f8ff"></div>
<div class="a" style="left:185px;top:622px;width:830px;height:1px;background:#b0dcf4"></div>

<svg class="a" style="left:185px;top:143px" width="828" height="478" viewBox="185 143 828 478">
<rect x="185" y="143" width="828" height="479" fill="#e8e6d7"/>
<path d="M423.5 144V589 M465.5 144V589 M507.5 144V589 M549.5 144V589 M591.5 144V589 M633.5 144V589 M676.5 144V589 M718.5 144V589 M760.5 144V589 M802.5 144V589 M844.5 144V589 M886.5 144V589 M928.5 144V589 M970.5 144V589 M423 169.5H1013 M423 211.5H1013 M423 253.5H1013 M423 337.5H1013 M423 379.5H1013 M423 421.5H1013 M423 463.5H1013 M423 505.5H1013 M423 547.5H1013" stroke="#f6d8c4" stroke-width="1" fill="none"/>
<path d="M185 143.5H1013" stroke="#606068" stroke-width="1" fill="none"/>
<path d="M185.5 144V621" stroke="#8e8e8e" stroke-width="1" fill="none"/>
<path d="M186.5 144V621" stroke="#9c9c98" stroke-width="1" fill="none"/>
<rect x="269" y="170.00" width="8" height="32.61" fill="#8a2528"/>
<rect x="269" y="202.31" width="8" height="32.61" fill="#b85000"/>
<rect x="269" y="234.62" width="8" height="32.61" fill="#c07818"/>
<rect x="269" y="266.92" width="8" height="32.61" fill="#9a9a30"/>
<rect x="269" y="299.23" width="8" height="32.61" fill="#70c040"/>
<rect x="269" y="331.54" width="8" height="32.61" fill="#33e060"/>
<rect x="269" y="363.85" width="8" height="32.61" fill="#33cc88"/>
<rect x="269" y="396.15" width="8" height="32.61" fill="#33b8b0"/>
<rect x="269" y="428.46" width="8" height="32.61" fill="#3388d8"/>
<rect x="269" y="460.77" width="8" height="32.61" fill="#3378ee"/>
<rect x="269" y="493.08" width="8" height="32.61" fill="#3050b4"/>
<rect x="269" y="525.38" width="8" height="32.61" fill="#263c96"/>
<rect x="269" y="557.69" width="8" height="32.61" fill="#14277a"/>
<rect x="346" y="170.00" width="8" height="32.61" fill="#a81010"/>
<rect x="346" y="202.31" width="8" height="32.61" fill="#ff0000"/>
<rect x="346" y="234.62" width="8" height="32.61" fill="#ffc000"/>
<rect x="346" y="266.92" width="8" height="32.61" fill="#f0e800"/>
<rect x="346" y="299.23" width="8" height="32.61" fill="#c0f000"/>
<rect x="346" y="331.54" width="8" height="32.61" fill="#00f000"/>
<rect x="346" y="363.85" width="8" height="32.61" fill="#00e090"/>
<rect x="346" y="396.15" width="8" height="32.61" fill="#00d0e0"/>
<rect x="346" y="428.46" width="8" height="32.61" fill="#0090f0"/>
<rect x="346" y="460.77" width="8" height="32.61" fill="#0000ff"/>
<rect x="346" y="493.08" width="8" height="32.61" fill="#3838c8"/>
<rect x="346" y="525.38" width="8" height="32.61" fill="#303070"/>
<rect x="346" y="557.69" width="8" height="32.61" fill="#000060"/>
</svg>
<div class="sc" style="left:278px;top:164.5px">122.51</div>
<div class="sc" style="left:355px;top:164.5px">1128.6</div>
<div class="sc" style="left:278px;top:196.8px">103.82</div>
<div class="sc" style="left:355px;top:196.8px">986.24</div>
<div class="sc" style="left:278px;top:229.1px">85.127</div>
<div class="sc" style="left:355px;top:229.1px">843.85</div>
<div class="sc" style="left:278px;top:261.4px">66.433</div>
<div class="sc" style="left:355px;top:261.4px">701.46</div>
<div class="sc" style="left:278px;top:293.7px">47.74</div>
<div class="sc" style="left:355px;top:293.7px">559.08</div>
<div class="sc" style="left:278px;top:326.0px">29.046</div>
<div class="sc" style="left:355px;top:326.0px">416.69</div>
<div class="sc" style="left:278px;top:358.3px">10.352</div>
<div class="sc" style="left:355px;top:358.3px">274.31</div>
<div class="sc" style="left:278px;top:390.7px"><span style="color:#8888a8">-</span>&#8202;8.3416</div>
<div class="sc" style="left:355px;top:390.7px">131.92</div>
<div class="sc" style="left:278px;top:423.0px"><span style="color:#8888a8">-</span>&#8202;27.035</div>
<div class="sc" style="left:355px;top:423.0px"><span style="color:#8888a8">-</span>&#8202;10.462</div>
<div class="sc" style="left:278px;top:455.3px"><span style="color:#8888a8">-</span>&#8202;45.729</div>
<div class="sc" style="left:355px;top:455.3px"><span style="color:#8888a8">-</span>&#8202;152.85</div>
<div class="sc" style="left:278px;top:487.6px"><span style="color:#8888a8">-</span>&#8202;64.423</div>
<div class="sc" style="left:355px;top:487.6px"><span style="color:#8888a8">-</span>&#8202;295.23</div>
<div class="sc" style="left:278px;top:519.9px"><span style="color:#8888a8">-</span>&#8202;83.117</div>
<div class="sc" style="left:355px;top:519.9px"><span style="color:#8888a8">-</span>&#8202;437.62</div>
<div class="sc" style="left:278px;top:552.2px"><span style="color:#8888a8">-</span>&#8202;101.81</div>
<div class="sc" style="left:355px;top:552.2px"><span style="color:#8888a8">-</span>&#8202;580</div>
<div class="sc" style="left:278px;top:584.5px"><span style="color:#8888a8">-</span>&#8202;120.5</div>
<div class="sc" style="left:355px;top:584.5px"><span style="color:#8888a8">-</span>&#8202;722.39</div>
<svg class="a" style="left:420px;top:165px" width="470" height="430" viewBox="420 165 470 430">
<defs><clipPath id="sec" clip-rule="evenodd"><path clip-rule="evenodd" d="M424 170H886V296H793C770 296 757.2 312 755 328L722.8 559C720.7 574 718 589 705 589H605C592 589 589.3 574 587.2 559L555 328C552.8 312 540 296 517 296H424Z M614 274H696C707 274 715.5 283 715.5 294L699.5 445C697.5 456 692 464 684 464H626C618 464 612.5 456 610.5 445L594.5 294C594.5 283 603 274 614 274Z"/></clipPath></defs>
<g clip-path="url(#sec)">
<rect x="420" y="165" width="470" height="430" fill="#14277a"/>
<path d="M420 193.8 L423 193.1 L425 193.9 L427 194.3 L428 193.0 L429 194.1 L432 193.6 L434 193.2 L435 194.6 L437 193.3 L439 193.1 L441 193.9 L442 194.4 L443 195.3 L445 194.9 L446 193.1 L449 195.0 L450 193.0 L451 192.8 L454 193.8 L456 195.3 L457 195.0 L460 195.1 L462 195.0 L465 195.2 L467 194.6 L469 194.2 L472 194.5 L474 196.0 L476 195.0 L478 193.1 L479 194.7 L482 193.3 L484 195.4 L485 193.7 L487 194.2 L490 193.7 L492 195.2 L494 194.5 L496 195.2 L498 194.1 L501 194.1 L502 193.9 L504 193.4 L506 193.0 L509 194.6 L510 193.9 L511 193.0 L513 195.1 L516 194.9 L518 193.8 L520 194.7 L523 195.7 L525 193.0 L528 195.7 L529 193.6 L532 194.3 L534 195.1 L536 195.9 L538 195.9 L540 194.0 L541 195.4 L542 195.6 L545 195.0 L546 193.6 L548 195.7 L551 195.7 L554 193.2 L555 193.9 L557 193.9 L559 195.1 L562 195.0 L564 193.7 L566 195.3 L569 194.5 L572 194.6 L575 195.8 L577 195.4 L579 194.7 L581 195.8 L582 195.3 L584 194.0 L586 195.4 L589 193.4 L592 193.2 L594 195.0 L596 194.3 L597 194.1 L599 193.2 L601 195.8 L602 193.6 L604 195.7 L606 195.3 L607 195.5 L608 194.4 L610 192.9 L612 193.3 L614 192.9 L617 194.0 L618 193.7 L620 193.6 L622 193.1 L623 193.0 L624 195.5 L626 193.4 L627 194.8 L630 194.1 L632 194.9 L633 194.9 L635 193.0 L638 193.9 L641 195.5 L642 195.4 L644 195.6 L646 193.1 L648 194.2 L650 194.7 L652 194.6 L653 193.7 L654 194.9 L657 192.8 L658 193.5 L659 195.5 L662 194.0 L664 193.0 L667 194.8 L670 193.0 L672 196.0 L673 194.5 L675 194.2 L678 193.4 L679 195.6 L681 195.9 L682 194.1 L684 193.1 L686 193.1 L688 193.4 L690 195.3 L692 195.2 L694 195.1 L696 194.8 L699 193.2 L702 193.4 L704 193.5 L705 193.7 L707 196.0 L708 195.6 L710 193.5 L712 195.5 L713 193.8 L716 194.6 L718 194.7 L720 195.1 L721 193.5 L722 195.3 L725 194.2 L727 195.0 L728 195.2 L731 194.2 L733 194.8 L734 194.8 L737 194.6 L739 195.3 L740 195.8 L743 194.3 L745 195.8 L748 194.6 L750 194.8 L752 195.9 L753 192.9 L755 193.5 L757 194.1 L760 193.5 L763 195.0 L764 195.3 L767 193.3 L770 194.4 L772 195.6 L775 195.6 L776 193.2 L777 193.5 L778 192.9 L781 194.6 L784 193.7 L787 195.4 L790 194.2 L792 194.4 L794 193.4 L795 194.5 L796 194.1 L799 194.3 L802 192.8 L804 193.0 L807 195.3 L809 194.8 L812 192.9 L814 194.7 L817 194.6 L818 194.7 L820 193.5 L823 193.6 L826 193.4 L828 195.7 L830 193.9 L832 195.6 L834 193.7 L836 193.3 L838 195.5 L840 195.0 L841 194.4 L842 194.8 L844 194.8 L846 193.6 L848 194.2 L850 193.4 L851 195.4 L853 193.4 L856 195.4 L858 193.3 L860 194.2 L861 194.3 L862 193.8 L865 193.3 L866 193.0 L867 193.9 L869 194.7 L871 194.3 L872 194.0 L874 193.2 L876 194.5 L878 193.2 L879 194.1 L882 195.7 L884 195.5 L886 193.3 L888 195.2 L889 193.8 L890 193.2 L890 600 L420 600Z" fill="#263c96"/>
<path d="M420 220.3 L421 220.4 L422 221.1 L424 219.2 L427 220.5 L429 221.4 L431 221.3 L433 219.8 L434 221.9 L437 222.0 L439 221.8 L440 222.0 L441 219.4 L442 220.1 L444 220.6 L447 220.3 L450 220.4 L451 219.4 L453 219.3 L455 221.8 L456 219.0 L457 220.6 L459 220.5 L462 220.5 L464 221.4 L466 218.9 L469 221.5 L472 221.3 L473 220.5 L474 220.7 L477 221.8 L479 221.1 L481 221.9 L483 220.5 L486 220.7 L488 221.1 L490 218.8 L492 220.9 L494 219.2 L496 221.1 L498 219.8 L501 220.8 L503 220.6 L505 221.1 L508 219.8 L511 219.2 L513 220.1 L515 221.7 L516 219.5 L517 219.5 L518 221.0 L521 221.5 L523 220.0 L524 221.8 L526 221.2 L529 221.7 L531 221.6 L532 220.6 L533 218.9 L536 221.3 L539 220.7 L540 219.6 L542 220.1 L545 220.8 L547 218.8 L550 220.8 L553 221.1 L555 221.8 L558 219.0 L559 221.6 L561 221.8 L562 220.6 L564 220.8 L567 220.3 L569 221.6 L571 219.8 L573 220.2 L575 220.6 L577 220.9 L579 221.1 L582 219.5 L584 219.1 L586 220.7 L588 219.7 L589 220.4 L591 220.7 L592 219.0 L594 221.4 L596 219.8 L597 220.1 L599 219.5 L602 219.6 L603 220.1 L604 220.1 L607 219.9 L609 219.0 L610 220.9 L612 219.9 L613 220.1 L616 221.5 L619 221.9 L622 221.1 L623 221.5 L626 220.9 L627 219.6 L630 221.6 L632 221.9 L634 220.0 L637 221.5 L638 220.5 L640 218.9 L641 221.7 L643 221.4 L645 219.4 L646 221.1 L648 219.8 L651 220.5 L653 220.6 L656 221.8 L659 219.5 L661 220.9 L663 219.9 L666 221.2 L667 219.2 L669 221.0 L671 220.5 L672 220.3 L674 221.3 L677 221.1 L680 220.6 L682 219.5 L684 220.5 L686 221.4 L687 220.5 L689 221.2 L691 219.6 L692 220.8 L693 220.9 L695 220.1 L696 218.8 L698 220.4 L699 219.0 L700 219.0 L703 219.0 L704 219.8 L706 219.9 L707 219.9 L709 219.3 L710 220.5 L713 220.4 L715 219.8 L718 220.6 L719 219.1 L721 219.7 L724 221.5 L726 221.0 L727 221.6 L729 220.9 L732 220.3 L734 221.5 L736 220.5 L739 219.2 L742 220.1 L744 219.5 L745 219.3 L747 220.0 L748 220.1 L750 219.8 L753 220.8 L754 219.4 L756 220.7 L758 220.8 L760 220.3 L762 220.1 L763 221.6 L765 220.1 L767 219.3 L769 220.5 L771 220.1 L774 221.5 L777 221.7 L780 220.2 L781 220.4 L783 219.9 L785 219.8 L787 220.2 L789 221.8 L791 221.7 L792 220.3 L795 219.1 L798 219.3 L799 219.7 L802 220.7 L804 220.3 L807 219.5 L809 220.0 L812 220.5 L814 220.0 L816 219.1 L818 220.2 L820 219.1 L823 219.2 L825 220.9 L827 220.2 L828 221.9 L830 221.3 L833 219.9 L836 220.3 L839 221.2 L842 219.3 L844 220.5 L845 221.9 L847 220.4 L849 221.0 L852 219.0 L855 220.2 L857 220.3 L859 220.9 L861 221.6 L863 221.9 L866 220.2 L868 219.4 L870 221.6 L873 220.9 L874 221.9 L877 221.4 L879 220.4 L882 218.9 L884 220.4 L886 220.5 L887 222.0 L888 219.9 L889 219.8 L890 600 L420 600Z" fill="#3050b4"/>
<path d="M420 243.8 L421 242.4 L424 241.9 L426 242.6 L429 244.3 L432 242.4 L435 243.5 L437 244.9 L439 245.0 L440 244.3 L443 242.5 L444 242.1 L447 243.4 L450 242.6 L452 244.3 L454 244.2 L456 243.1 L458 242.2 L460 243.2 L462 243.6 L463 242.5 L465 243.4 L467 243.1 L469 242.4 L470 244.2 L472 245.0 L473 242.0 L476 243.9 L479 244.8 L481 242.4 L484 245.0 L487 243.5 L489 244.1 L491 244.6 L493 244.4 L495 244.0 L497 243.1 L499 242.9 L501 242.8 L503 242.0 L505 244.0 L507 241.8 L509 244.4 L510 242.2 L513 243.5 L515 241.9 L517 244.4 L518 243.9 L520 242.5 L522 242.3 L524 243.0 L526 243.2 L528 244.8 L531 242.2 L532 244.5 L535 242.0 L536 243.7 L538 243.2 L540 244.4 L543 243.4 L545 243.4 L547 244.2 L549 242.5 L551 243.7 L553 243.1 L554 243.9 L555 242.8 L557 243.6 L558 244.1 L560 241.9 L562 242.3 L564 244.1 L567 244.3 L569 244.5 L570 242.6 L573 244.1 L575 244.9 L578 242.8 L579 242.4 L582 243.0 L585 243.2 L586 243.9 L589 242.7 L590 244.2 L593 243.4 L595 243.0 L598 241.9 L601 243.6 L603 244.8 L605 244.1 L606 244.3 L608 242.8 L611 243.4 L613 242.8 L616 244.1 L619 244.8 L620 244.2 L622 243.3 L624 244.2 L626 243.6 L629 242.5 L632 244.1 L634 243.3 L636 241.8 L639 243.3 L641 244.9 L643 243.6 L645 242.7 L646 243.7 L648 243.2 L650 243.8 L652 244.4 L654 244.2 L655 243.1 L658 243.7 L659 244.3 L662 242.7 L664 242.1 L665 243.0 L668 242.4 L670 243.9 L673 242.7 L675 242.5 L677 243.2 L679 243.4 L680 244.9 L681 243.8 L683 243.2 L685 242.7 L687 244.8 L688 243.7 L689 243.0 L691 242.6 L692 245.0 L695 243.5 L696 244.1 L699 242.3 L701 242.7 L704 243.7 L707 242.3 L708 242.6 L710 241.9 L713 244.1 L716 243.2 L718 244.9 L719 243.1 L720 244.1 L721 243.5 L722 243.3 L724 244.2 L727 241.8 L730 243.8 L732 244.1 L734 242.8 L736 242.7 L737 244.0 L739 244.1 L742 242.8 L743 242.9 L744 243.3 L746 243.8 L749 242.9 L751 242.9 L752 243.3 L754 243.8 L757 242.6 L759 243.9 L760 243.2 L762 243.5 L763 244.0 L765 243.5 L768 244.4 L769 242.7 L771 242.7 L773 244.2 L774 242.9 L776 243.8 L778 242.2 L781 243.2 L782 242.5 L783 243.5 L785 243.3 L787 244.6 L788 244.5 L791 242.8 L793 244.0 L795 244.0 L798 242.5 L799 243.8 L801 243.0 L804 244.4 L805 245.0 L807 242.8 L808 244.4 L809 244.2 L812 243.7 L813 243.4 L816 243.0 L819 242.5 L822 242.5 L825 242.9 L827 244.3 L828 243.6 L830 242.2 L833 242.7 L836 242.7 L839 244.4 L840 243.5 L842 243.1 L843 243.9 L845 242.4 L848 244.1 L850 244.9 L853 243.7 L855 244.1 L857 243.7 L859 242.8 L861 243.0 L863 244.1 L865 243.6 L867 242.3 L869 244.9 L871 241.9 L873 242.2 L875 243.2 L877 243.4 L879 242.8 L881 243.4 L883 244.9 L885 244.2 L887 242.8 L889 242.5 L890 600 L420 600Z" fill="#3378ee"/>
<path d="M420 269.1 L422 268.8 L425 269.2 L427 270.5 L429 270.1 L430 268.0 L431 270.0 L432 269.2 L434 270.1 L435 269.1 L437 270.7 L438 268.5 L439 269.2 L442 270.9 L443 268.9 L444 269.9 L445 269.3 L447 269.4 L449 270.9 L451 270.9 L452 268.3 L454 270.1 L456 270.0 L457 269.3 L458 269.7 L460 268.9 L461 269.9 L463 270.8 L466 269.5 L469 268.3 L471 269.2 L473 269.2 L475 270.4 L477 269.4 L480 268.0 L482 268.6 L484 268.7 L485 269.5 L487 268.4 L489 268.3 L490 268.3 L492 269.9 L494 269.2 L495 270.4 L497 268.5 L499 268.3 L502 270.6 L503 268.2 L504 269.9 L505 269.7 L506 268.1 L508 270.3 L510 268.4 L511 269.7 L513 270.7 L516 268.4 L518 268.1 L520 270.7 L521 269.6 L522 268.9 L525 270.5 L526 269.5 L527 271.0 L529 269.3 L530 268.3 L533 267.8 L536 269.6 L539 270.0 L542 269.4 L543 268.4 L545 270.0 L548 270.5 L549 269.6 L550 267.9 L552 268.6 L554 269.4 L556 269.7 L559 268.7 L561 268.0 L563 268.6 L565 268.8 L567 270.9 L569 268.7 L571 270.3 L572 270.0 L575 268.9 L578 268.5 L581 268.7 L584 269.3 L587 269.7 L588 269.0 L589 269.9 L592 270.3 L593 268.8 L594 268.9 L596 268.5 L598 270.6 L601 271.0 L603 268.2 L605 270.8 L607 269.0 L609 268.2 L611 268.6 L614 270.6 L615 270.2 L617 270.9 L619 268.7 L621 270.6 L623 270.7 L626 270.8 L627 267.9 L630 268.4 L631 269.6 L633 268.6 L634 268.9 L636 268.5 L637 268.5 L638 268.0 L639 267.9 L641 270.8 L643 269.5 L646 269.8 L647 268.4 L649 267.9 L651 269.3 L652 267.9 L654 267.9 L657 268.0 L660 270.1 L663 268.5 L665 269.1 L666 269.6 L667 269.6 L669 270.6 L671 268.2 L672 270.5 L675 271.0 L677 270.9 L678 270.0 L681 269.0 L683 270.5 L685 268.6 L688 268.4 L690 268.7 L693 269.8 L696 270.6 L698 270.9 L701 270.9 L702 270.0 L705 270.9 L707 268.3 L709 269.2 L712 269.0 L714 269.1 L716 269.8 L719 268.8 L722 268.9 L725 270.1 L727 268.4 L730 268.6 L732 269.8 L734 269.1 L737 269.1 L738 269.5 L741 267.9 L744 268.7 L746 270.4 L748 270.6 L750 268.5 L753 267.8 L755 270.6 L756 268.8 L759 268.0 L762 269.4 L765 269.8 L766 268.8 L769 267.9 L771 269.9 L772 268.5 L774 270.4 L776 268.7 L777 269.1 L780 269.3 L782 269.9 L783 269.9 L785 268.9 L786 269.4 L788 268.5 L790 268.1 L792 270.7 L793 268.2 L795 267.8 L797 268.7 L799 267.9 L801 270.9 L803 270.9 L805 268.7 L807 268.1 L809 269.9 L812 270.0 L813 270.7 L814 269.9 L816 270.5 L819 269.8 L820 270.6 L822 269.7 L824 268.3 L826 269.2 L828 268.0 L830 270.0 L832 269.6 L834 268.1 L837 269.6 L840 268.9 L843 270.4 L845 268.8 L847 269.3 L850 268.2 L853 269.6 L856 268.4 L859 268.9 L861 271.0 L863 269.5 L865 268.9 L867 269.4 L869 270.1 L870 269.7 L873 270.8 L876 267.9 L879 268.8 L880 269.6 L883 270.2 L886 269.0 L888 270.9 L889 268.4 L890 600 L420 600Z" fill="#3388d8"/>
<path d="M420 294.5 L422 292.9 L423 295.2 L425 295.7 L427 294.9 L429 295.6 L431 295.6 L433 295.9 L435 294.7 L436 295.0 L438 293.2 L440 293.6 L443 292.9 L445 294.4 L447 294.9 L449 294.2 L450 295.7 L453 295.3 L454 293.9 L457 294.4 L458 292.8 L460 294.1 L462 295.0 L464 293.9 L465 293.1 L466 294.2 L468 295.6 L470 295.7 L471 294.9 L473 294.9 L474 293.6 L476 294.9 L478 293.0 L479 294.5 L481 294.8 L483 293.9 L484 293.8 L487 294.2 L488 294.0 L489 295.0 L491 295.4 L494 294.4 L496 293.2 L498 295.1 L499 294.3 L501 295.8 L503 293.1 L505 295.1 L506 295.9 L508 293.5 L510 295.8 L512 295.1 L515 294.8 L516 293.7 L518 293.7 L520 293.5 L521 294.2 L523 294.4 L526 294.3 L527 293.5 L529 294.0 L530 293.4 L532 295.2 L535 295.9 L538 293.8 L540 293.4 L543 293.6 L545 293.7 L546 293.1 L548 293.5 L549 292.9 L551 293.2 L553 293.1 L555 295.1 L556 294.8 L558 295.2 L560 293.7 L562 295.4 L564 295.6 L566 295.7 L568 293.3 L571 295.0 L574 295.5 L576 294.9 L578 294.2 L579 295.8 L581 293.7 L584 295.4 L587 295.7 L589 294.7 L592 292.9 L594 293.7 L595 293.3 L598 294.3 L601 295.2 L602 294.6 L604 294.7 L605 294.7 L607 293.7 L608 294.9 L610 294.8 L611 295.3 L614 295.8 L616 295.9 L618 294.3 L621 293.6 L622 294.7 L625 294.3 L628 295.8 L629 295.2 L631 293.8 L633 295.6 L635 295.3 L638 295.9 L640 294.7 L641 294.5 L644 293.6 L646 294.8 L648 295.6 L650 293.9 L653 293.6 L655 295.8 L656 294.2 L658 294.4 L660 295.4 L661 294.3 L662 295.2 L664 293.6 L666 295.5 L667 293.3 L670 293.1 L672 292.9 L674 295.8 L676 295.0 L678 295.0 L681 293.3 L682 294.0 L685 294.9 L688 294.4 L690 293.0 L691 293.2 L692 293.6 L693 293.6 L695 295.6 L697 295.8 L698 293.3 L699 293.8 L702 295.7 L705 294.7 L706 296.0 L708 294.7 L710 294.4 L712 294.3 L715 293.8 L716 295.2 L718 293.3 L720 293.9 L722 294.9 L723 294.8 L725 293.8 L728 292.8 L731 294.0 L734 293.3 L737 295.2 L738 294.1 L739 295.5 L741 295.1 L743 293.4 L745 294.0 L748 295.8 L750 295.7 L752 294.1 L754 295.6 L757 294.5 L759 294.3 L761 293.3 L762 293.2 L765 294.6 L767 293.3 L769 293.2 L770 294.2 L773 295.7 L775 293.9 L776 293.3 L778 295.1 L780 292.9 L781 292.8 L783 295.2 L786 294.0 L788 293.0 L789 294.4 L791 295.4 L792 293.2 L793 294.1 L795 293.9 L796 294.4 L798 293.8 L800 294.0 L801 293.9 L804 293.6 L805 294.3 L806 293.2 L807 295.0 L808 293.8 L809 294.1 L812 294.2 L814 293.3 L816 294.0 L817 295.8 L818 294.7 L819 295.2 L821 293.3 L824 293.6 L827 294.5 L830 295.8 L832 295.4 L835 295.1 L836 293.9 L838 293.7 L841 295.1 L844 293.8 L845 294.2 L848 294.7 L850 295.9 L852 295.2 L855 294.2 L857 295.0 L858 296.0 L859 294.8 L860 295.9 L862 294.0 L864 295.7 L867 294.2 L869 295.6 L871 295.1 L873 295.2 L875 295.1 L876 295.8 L878 294.8 L879 294.9 L882 293.7 L885 295.2 L887 294.2 L888 295.4 L890 600 L420 600Z" fill="#33b8b0"/>
<path d="M420 318.5 L423 317.2 L424 316.8 L426 319.1 L429 319.6 L431 319.0 L433 319.6 L435 317.6 L437 318.9 L438 317.7 L439 319.8 L442 319.0 L444 319.6 L446 317.6 L448 316.8 L450 319.8 L452 317.0 L455 319.6 L457 317.7 L459 317.5 L460 317.4 L461 317.9 L463 319.3 L465 318.3 L467 318.3 L469 317.1 L471 318.2 L474 318.4 L476 319.7 L477 318.5 L478 320.0 L480 319.1 L483 318.7 L485 318.4 L488 318.8 L489 318.5 L491 318.1 L493 319.9 L495 319.4 L496 317.9 L498 317.4 L499 319.1 L502 319.5 L505 318.9 L506 319.7 L507 318.6 L510 317.3 L512 317.8 L514 319.7 L516 317.3 L518 317.0 L519 319.8 L522 318.6 L523 319.3 L526 319.3 L528 319.0 L529 317.7 L532 316.9 L534 318.6 L537 318.9 L538 318.7 L540 317.2 L542 318.7 L545 319.9 L548 318.2 L550 318.4 L551 317.0 L552 319.0 L555 317.1 L557 317.8 L558 318.8 L560 318.7 L563 319.3 L566 317.4 L568 318.5 L570 317.1 L572 318.8 L574 318.9 L575 317.6 L578 319.4 L580 317.4 L582 319.2 L585 317.2 L588 316.9 L589 318.7 L591 317.2 L593 318.0 L596 318.9 L598 317.2 L601 319.2 L604 319.8 L606 318.6 L609 319.5 L611 318.1 L613 319.9 L615 317.8 L617 317.8 L619 318.8 L622 318.5 L623 319.5 L626 319.9 L627 318.1 L629 317.4 L631 318.8 L634 318.8 L635 317.1 L637 319.9 L638 318.2 L639 319.9 L640 318.9 L642 317.0 L644 318.5 L647 317.2 L650 319.0 L652 317.6 L654 319.6 L656 319.3 L658 319.3 L659 317.6 L661 319.8 L663 318.8 L665 319.5 L667 316.9 L669 316.9 L671 318.3 L674 318.4 L677 319.7 L679 318.5 L680 317.1 L682 317.7 L683 317.8 L685 317.7 L687 319.9 L689 318.1 L692 316.9 L693 317.5 L695 317.5 L697 318.6 L700 318.7 L703 317.8 L705 319.6 L707 317.8 L709 318.2 L712 317.0 L714 318.7 L717 318.3 L719 318.8 L720 317.3 L722 319.4 L725 317.6 L727 317.8 L728 319.5 L729 316.9 L732 319.4 L734 318.9 L736 317.4 L738 318.5 L740 317.1 L741 318.6 L744 317.3 L746 319.4 L748 319.1 L751 319.0 L754 316.9 L756 317.9 L757 319.2 L759 318.6 L761 318.5 L763 318.4 L766 316.9 L768 316.9 L770 318.0 L773 316.8 L775 316.8 L778 317.7 L781 316.9 L783 316.8 L784 317.1 L786 319.8 L789 318.0 L791 317.5 L794 317.9 L796 317.0 L798 318.2 L799 318.1 L801 317.9 L804 317.7 L805 318.9 L807 317.5 L809 317.0 L811 320.0 L813 317.9 L815 318.6 L816 320.0 L817 318.9 L818 318.4 L821 318.0 L823 317.8 L826 319.2 L827 319.1 L829 317.8 L831 318.2 L834 319.0 L837 318.1 L839 318.3 L841 319.2 L843 317.9 L845 317.7 L848 318.3 L851 319.5 L853 318.8 L856 317.3 L859 319.5 L861 317.6 L862 317.1 L863 317.8 L865 319.0 L868 318.9 L871 318.5 L873 319.0 L875 318.6 L876 319.3 L879 317.6 L882 317.1 L884 320.0 L886 318.8 L888 317.7 L890 600 L420 600Z" fill="#33cc88"/>
<path d="M420 342.1 L422 341.0 L423 343.3 L425 342.9 L426 343.8 L429 342.0 L431 341.2 L434 341.2 L437 343.0 L439 341.8 L441 340.8 L442 343.3 L443 342.7 L445 341.6 L447 343.9 L450 342.3 L452 341.0 L455 342.9 L458 342.2 L459 341.1 L461 341.4 L462 340.9 L465 340.9 L468 341.1 L470 343.6 L472 342.5 L473 341.7 L475 343.2 L478 341.8 L481 343.1 L483 342.4 L485 343.7 L487 343.7 L489 342.8 L491 342.2 L493 342.5 L495 342.8 L497 342.6 L499 343.7 L501 343.9 L504 342.0 L505 342.3 L507 341.3 L508 343.0 L509 342.7 L511 341.6 L514 341.4 L516 342.3 L518 342.5 L519 343.6 L522 343.7 L523 341.6 L526 342.6 L528 342.2 L530 341.0 L533 342.7 L536 342.0 L538 342.9 L539 341.2 L540 341.8 L542 343.5 L544 343.5 L546 341.9 L548 343.5 L549 341.7 L552 342.4 L554 342.4 L557 342.2 L558 341.3 L560 340.9 L561 341.2 L564 341.0 L567 342.5 L570 342.5 L571 343.7 L573 344.0 L575 343.8 L578 341.3 L581 342.0 L583 343.7 L585 343.5 L588 341.5 L591 342.9 L593 341.0 L596 342.9 L599 342.6 L600 341.9 L603 342.0 L606 342.6 L607 343.1 L609 340.9 L612 343.1 L613 342.0 L615 343.3 L616 343.6 L617 342.3 L618 343.6 L619 343.7 L620 342.2 L621 343.6 L623 341.3 L626 343.2 L629 342.6 L631 343.8 L633 342.5 L636 342.8 L637 343.9 L638 341.4 L641 340.9 L644 342.6 L646 340.9 L648 341.9 L650 343.3 L653 340.9 L655 341.5 L658 343.9 L660 343.3 L661 342.9 L663 343.1 L665 343.0 L668 343.2 L669 342.0 L671 341.7 L672 342.0 L673 342.5 L675 342.4 L678 341.5 L680 342.0 L682 343.2 L685 343.5 L687 343.4 L689 342.7 L691 343.7 L694 343.5 L697 342.3 L698 342.2 L700 343.0 L702 341.3 L705 343.9 L707 341.6 L708 344.0 L709 342.8 L710 343.5 L712 343.9 L714 341.3 L715 343.6 L717 341.7 L720 342.4 L721 342.7 L722 341.0 L724 341.7 L726 342.2 L728 340.9 L729 341.2 L730 341.6 L731 343.6 L733 342.7 L735 342.7 L737 341.3 L740 343.1 L743 342.1 L744 341.0 L746 340.9 L749 341.7 L752 341.8 L754 343.0 L756 342.9 L758 343.8 L760 343.7 L762 342.5 L764 342.4 L766 342.8 L768 343.1 L769 342.1 L771 342.9 L773 343.0 L776 341.4 L779 343.5 L782 341.3 L783 341.4 L785 343.8 L788 341.4 L790 341.2 L791 341.0 L793 341.4 L796 343.6 L799 340.9 L801 342.9 L803 342.2 L806 342.5 L809 341.4 L811 341.5 L813 341.6 L815 341.9 L818 341.1 L821 344.0 L822 343.0 L825 343.9 L827 341.0 L829 343.6 L830 342.9 L832 341.3 L834 342.3 L836 344.0 L837 343.3 L839 343.7 L841 340.9 L843 341.7 L845 342.9 L848 341.2 L849 343.0 L851 341.8 L852 341.1 L854 341.0 L855 341.2 L857 340.8 L858 343.6 L859 342.8 L861 343.1 L862 342.6 L864 341.7 L865 340.9 L867 341.5 L869 343.6 L871 343.1 L874 340.8 L876 341.1 L877 341.7 L878 341.9 L879 341.5 L880 343.4 L881 342.8 L883 343.5 L886 341.0 L888 343.5 L890 343.4 L890 600 L420 600Z" fill="#33e060"/>
<path d="M420 369.2 L423 370.4 L425 368.7 L427 370.4 L429 369.0 L431 369.9 L432 368.7 L433 368.1 L435 370.2 L436 369.6 L438 369.2 L440 370.9 L441 367.9 L443 370.0 L445 370.0 L447 369.9 L449 369.0 L451 370.1 L453 370.7 L455 367.9 L457 369.1 L458 368.1 L460 370.0 L461 369.5 L463 369.9 L465 368.4 L468 368.8 L469 368.1 L471 370.7 L472 370.6 L475 370.5 L476 370.8 L478 370.4 L480 368.2 L482 370.4 L484 368.8 L486 369.6 L488 368.1 L490 369.0 L493 369.2 L495 370.9 L496 370.1 L498 370.0 L500 370.7 L502 367.9 L503 369.0 L506 367.9 L507 370.2 L510 368.6 L512 371.0 L515 370.1 L518 368.3 L520 369.5 L521 369.5 L523 370.6 L526 370.4 L527 368.7 L530 369.5 L532 370.1 L534 368.3 L536 368.4 L537 369.9 L539 369.5 L540 369.6 L543 369.0 L544 367.8 L546 370.6 L548 370.1 L551 370.6 L553 369.8 L556 370.6 L558 371.0 L559 368.6 L561 368.0 L562 368.8 L564 368.0 L567 368.5 L569 368.1 L571 370.6 L572 369.2 L575 370.6 L576 368.6 L579 368.2 L581 370.3 L584 368.9 L586 370.2 L587 368.9 L588 370.5 L589 369.0 L591 369.9 L592 371.0 L594 370.0 L596 369.7 L599 370.9 L601 368.8 L603 371.0 L604 368.7 L607 369.9 L610 368.4 L612 367.9 L614 371.0 L615 369.8 L616 370.0 L618 369.5 L620 370.6 L621 370.9 L624 370.9 L627 370.8 L628 370.8 L630 370.9 L632 368.1 L634 369.7 L636 369.6 L638 368.6 L639 368.5 L642 370.4 L645 370.9 L646 368.0 L647 370.1 L649 370.9 L651 368.6 L652 368.9 L654 369.6 L656 369.6 L658 369.2 L661 369.7 L663 368.4 L665 369.1 L666 368.6 L669 369.0 L671 368.9 L672 369.6 L674 369.6 L677 368.9 L680 369.2 L683 367.9 L685 370.2 L687 370.0 L690 369.4 L692 370.5 L694 369.0 L697 369.0 L700 369.3 L701 369.6 L704 370.9 L706 369.9 L709 368.2 L711 368.3 L713 369.8 L716 369.2 L717 368.1 L718 368.9 L720 368.7 L723 368.8 L725 367.8 L727 368.8 L728 370.8 L730 370.1 L732 370.6 L734 369.1 L736 370.9 L739 368.4 L742 367.9 L745 370.9 L748 369.8 L749 368.9 L751 369.8 L753 370.1 L756 368.1 L757 368.3 L760 368.3 L761 368.3 L762 370.1 L764 368.5 L767 369.6 L769 368.9 L772 370.7 L775 369.4 L778 369.0 L779 367.9 L781 367.8 L783 369.4 L785 369.0 L788 369.9 L790 368.5 L791 369.5 L793 370.4 L794 370.5 L797 369.9 L799 368.4 L802 370.0 L805 369.2 L806 368.7 L807 369.5 L808 368.2 L811 368.5 L813 370.1 L815 369.5 L818 370.9 L819 370.0 L821 367.9 L824 369.2 L827 370.2 L828 368.1 L830 368.4 L831 369.0 L832 370.2 L833 367.9 L836 369.8 L838 369.4 L840 368.4 L843 369.7 L845 369.1 L846 370.6 L849 368.7 L852 369.7 L854 369.8 L856 367.9 L857 368.1 L859 368.1 L861 370.3 L864 368.7 L866 369.4 L867 369.4 L869 370.7 L871 368.4 L872 368.4 L874 368.9 L877 368.3 L880 368.4 L883 370.3 L885 368.3 L886 367.9 L887 369.4 L889 368.2 L890 600 L420 600Z" fill="#70c040"/>
<path d="M420 398.1 L422 397.9 L424 400.0 L427 400.8 L429 399.9 L432 398.0 L434 400.6 L436 399.9 L439 400.0 L440 400.2 L442 398.6 L444 399.7 L446 398.1 L448 399.8 L450 400.5 L453 398.6 L456 398.6 L458 398.4 L460 400.7 L461 400.1 L462 397.9 L464 398.4 L467 398.8 L469 400.3 L472 399.1 L473 400.6 L474 400.0 L476 399.7 L478 399.7 L480 398.2 L483 400.3 L485 398.6 L487 398.2 L490 398.8 L493 399.6 L494 398.7 L495 399.7 L497 399.6 L500 399.6 L502 400.6 L505 398.3 L508 400.8 L511 399.8 L512 399.1 L515 400.1 L516 400.5 L517 399.5 L519 400.0 L521 400.5 L522 398.3 L524 400.8 L527 400.9 L529 398.0 L532 398.0 L534 399.5 L537 398.9 L539 398.4 L540 400.1 L543 398.4 L545 398.3 L548 400.0 L551 400.2 L554 398.4 L556 400.4 L558 398.7 L560 400.9 L561 400.7 L563 400.2 L565 397.9 L568 400.6 L570 399.7 L573 399.4 L574 398.2 L576 399.9 L578 400.9 L581 400.8 L582 400.9 L584 397.9 L586 400.8 L587 400.6 L588 400.2 L591 398.0 L593 398.2 L595 400.2 L597 400.6 L599 400.5 L601 399.7 L603 398.3 L604 400.7 L607 398.1 L609 398.6 L611 400.5 L613 398.5 L614 397.9 L617 400.6 L619 400.8 L621 400.2 L624 400.9 L625 399.3 L627 399.9 L629 399.1 L630 399.9 L632 399.0 L634 399.9 L636 400.6 L638 398.9 L639 399.8 L642 400.0 L644 398.2 L645 399.2 L648 399.5 L650 400.9 L652 399.9 L653 399.8 L655 399.7 L658 398.9 L660 398.9 L661 400.9 L664 398.6 L667 400.2 L670 401.0 L672 399.6 L673 400.0 L675 399.4 L677 398.2 L679 398.8 L682 400.2 L684 399.5 L687 399.1 L688 398.3 L690 398.6 L693 399.9 L695 399.0 L697 399.9 L699 400.7 L701 398.0 L704 398.7 L706 400.7 L709 398.5 L711 400.4 L714 400.5 L715 399.8 L717 399.6 L718 397.8 L720 399.8 L723 399.9 L724 398.8 L726 398.0 L728 398.1 L729 399.3 L731 400.2 L734 400.2 L736 400.1 L737 398.3 L740 399.2 L743 398.7 L745 400.8 L747 398.8 L748 398.4 L750 398.0 L753 399.9 L756 399.9 L758 400.0 L760 400.4 L763 399.4 L766 399.7 L769 399.0 L771 398.8 L772 401.0 L773 401.0 L775 401.0 L777 399.4 L779 397.9 L781 399.4 L782 399.8 L785 398.7 L787 399.5 L789 400.5 L792 398.0 L793 399.5 L794 399.3 L796 399.1 L799 398.5 L801 398.3 L803 400.3 L805 399.8 L807 398.2 L808 399.4 L810 399.6 L812 399.1 L814 400.7 L815 399.0 L816 400.1 L818 398.0 L820 398.8 L821 400.7 L823 400.8 L825 397.9 L827 400.4 L828 399.8 L829 400.3 L831 399.5 L832 400.1 L834 399.4 L836 400.1 L837 398.9 L839 399.3 L842 400.8 L845 399.7 L847 399.7 L849 400.1 L851 398.1 L853 399.6 L856 399.4 L859 400.8 L861 398.3 L862 398.6 L864 398.1 L866 398.4 L869 400.2 L871 399.5 L873 398.2 L875 398.6 L876 398.8 L879 400.4 L882 399.8 L884 398.3 L885 398.2 L887 400.8 L889 399.6 L890 600 L420 600Z" fill="#9a9a30"/>
<path d="M420 436.0 L423 436.0 L426 433.9 L428 433.9 L431 436.9 L433 434.9 L434 435.4 L436 435.6 L437 435.0 L439 434.4 L442 436.0 L444 435.2 L445 436.6 L446 436.2 L449 434.0 L452 435.9 L453 435.1 L455 434.7 L458 434.9 L461 435.3 L462 434.5 L465 435.8 L467 435.2 L469 434.1 L472 435.8 L474 434.0 L477 434.2 L478 435.6 L479 436.2 L481 434.8 L484 433.9 L486 436.9 L488 434.1 L490 436.9 L493 435.0 L495 434.5 L498 436.0 L501 436.4 L503 436.2 L504 436.2 L506 435.3 L508 436.4 L510 436.0 L511 434.4 L513 436.3 L514 436.9 L517 435.9 L518 436.7 L520 435.1 L522 436.5 L525 435.7 L527 434.7 L530 435.5 L532 436.2 L534 434.2 L535 435.9 L536 434.2 L539 435.7 L541 436.1 L542 434.3 L544 436.0 L546 436.8 L548 434.4 L549 436.3 L551 433.8 L553 434.4 L556 435.1 L559 434.7 L561 436.4 L562 435.5 L564 434.9 L567 434.5 L569 436.2 L572 435.1 L575 433.8 L578 433.9 L580 435.9 L583 433.8 L584 436.7 L586 436.8 L587 435.6 L590 436.7 L593 434.4 L595 434.5 L597 434.8 L598 436.8 L601 434.7 L604 436.1 L605 434.2 L607 434.9 L608 436.7 L610 436.0 L611 435.4 L614 435.5 L616 436.4 L619 435.1 L620 436.3 L621 436.2 L623 434.1 L624 436.7 L626 436.2 L627 434.2 L630 435.0 L632 434.1 L634 434.0 L636 435.8 L638 434.6 L639 433.9 L640 434.8 L642 436.2 L644 434.9 L647 434.5 L650 435.0 L652 434.1 L653 434.1 L654 434.6 L656 436.8 L658 435.4 L659 436.0 L660 435.0 L662 436.2 L664 435.4 L665 434.9 L667 435.5 L669 436.0 L671 434.5 L674 434.4 L676 436.9 L678 434.8 L679 434.3 L680 435.9 L683 435.0 L686 436.1 L689 435.9 L690 435.4 L692 434.5 L694 436.3 L696 435.8 L697 434.7 L699 435.2 L701 436.8 L703 435.9 L704 434.0 L705 436.1 L707 436.8 L709 435.9 L712 434.3 L713 435.5 L715 435.7 L717 433.9 L719 436.0 L722 437.0 L724 434.6 L725 434.7 L728 436.8 L730 435.8 L732 436.6 L733 434.2 L735 436.9 L737 435.7 L739 434.2 L740 434.1 L743 436.1 L746 435.0 L748 436.5 L751 436.8 L754 436.1 L755 436.9 L756 436.7 L758 436.0 L760 436.3 L762 435.2 L764 434.0 L766 434.5 L769 434.0 L771 434.3 L772 434.2 L774 434.7 L776 435.0 L779 435.4 L782 434.2 L785 434.1 L787 434.0 L788 434.5 L791 434.0 L792 433.8 L793 434.3 L795 434.8 L797 435.2 L798 434.8 L801 433.8 L802 435.7 L804 434.4 L806 435.0 L808 436.5 L810 435.1 L811 436.2 L813 435.9 L815 434.2 L817 436.5 L820 434.0 L821 434.2 L823 436.8 L825 434.6 L828 435.8 L831 434.9 L833 435.5 L835 436.7 L838 433.9 L840 434.2 L842 434.4 L844 434.3 L846 436.2 L849 434.1 L850 433.9 L853 434.5 L855 435.9 L856 436.2 L859 435.9 L860 434.7 L862 435.4 L864 436.8 L867 436.9 L869 433.8 L871 434.5 L873 434.7 L874 435.4 L876 436.8 L878 434.8 L879 435.0 L880 436.7 L881 436.9 L883 434.0 L884 435.2 L885 434.1 L888 436.5 L890 434.9 L890 600 L420 600Z" fill="#c07818"/>
<path d="M420 476.0 L423 475.6 L424 476.7 L427 477.9 L429 476.5 L430 478.0 L432 476.1 L434 477.4 L437 477.8 L440 475.2 L442 475.2 L444 476.4 L446 477.7 L447 478.0 L449 475.3 L452 476.8 L454 475.9 L456 476.2 L458 478.0 L460 476.1 L462 476.8 L464 476.5 L467 477.9 L468 477.0 L470 476.3 L471 475.0 L473 476.0 L475 476.4 L478 476.8 L479 476.5 L481 476.5 L483 475.8 L485 475.4 L486 475.7 L488 475.3 L490 476.3 L493 476.0 L495 476.7 L497 477.7 L500 475.3 L502 478.0 L504 476.8 L505 476.0 L507 476.4 L509 476.2 L512 475.0 L514 477.3 L517 476.2 L518 476.4 L519 476.4 L521 475.2 L523 476.4 L524 475.5 L527 477.8 L528 476.7 L530 477.4 L531 476.7 L533 475.9 L534 476.2 L536 476.5 L539 477.9 L541 474.9 L542 475.8 L545 476.4 L547 476.3 L549 474.9 L551 475.6 L554 475.0 L556 477.8 L558 477.9 L560 477.8 L563 476.9 L565 474.8 L568 476.4 L570 475.4 L572 476.3 L574 477.5 L576 477.1 L579 475.7 L580 476.7 L583 477.0 L586 476.7 L588 477.9 L590 477.0 L592 475.5 L594 475.7 L595 476.4 L597 476.4 L599 477.0 L601 478.0 L603 474.9 L604 477.5 L606 476.1 L608 477.2 L610 476.9 L612 476.0 L615 475.0 L617 475.7 L619 477.9 L622 476.1 L624 474.8 L626 475.5 L628 477.3 L630 476.5 L633 476.2 L635 476.5 L637 476.3 L639 477.2 L642 475.9 L643 478.0 L644 474.9 L646 476.7 L648 476.6 L650 475.4 L652 477.0 L654 476.2 L656 475.1 L659 475.2 L660 477.6 L662 475.4 L664 478.0 L666 477.8 L667 476.0 L669 476.0 L671 476.7 L672 476.2 L673 476.2 L675 477.8 L677 477.5 L678 477.9 L680 476.1 L682 475.0 L684 477.4 L686 475.1 L689 477.5 L691 477.7 L693 474.9 L695 477.2 L697 474.9 L699 475.7 L701 475.7 L703 477.7 L706 476.7 L707 475.8 L710 475.6 L712 477.6 L713 475.3 L716 476.7 L718 477.3 L720 477.9 L722 476.5 L723 477.2 L725 476.6 L728 475.3 L729 475.3 L732 476.7 L735 477.7 L736 477.9 L737 477.1 L739 476.1 L741 477.9 L744 477.7 L746 477.8 L749 476.1 L752 475.1 L753 476.7 L755 475.3 L757 477.1 L760 475.8 L763 476.5 L765 475.7 L766 477.6 L768 477.8 L770 476.3 L771 476.8 L774 474.9 L776 476.6 L778 475.0 L779 475.2 L780 475.0 L782 477.7 L784 475.5 L786 477.5 L787 475.6 L789 475.4 L791 477.0 L793 477.1 L796 477.2 L799 477.0 L802 476.4 L804 476.7 L806 477.0 L807 476.2 L810 477.5 L812 476.1 L814 476.9 L817 476.2 L819 477.2 L821 477.0 L823 477.9 L824 475.9 L826 476.1 L828 475.4 L829 476.3 L831 477.9 L832 477.6 L833 475.1 L835 474.9 L837 477.0 L838 476.8 L840 476.2 L843 476.6 L844 475.6 L847 476.4 L848 475.1 L851 477.6 L854 475.3 L857 475.9 L859 477.1 L860 475.0 L863 477.2 L864 477.7 L867 477.4 L869 477.9 L870 477.9 L871 475.7 L873 475.3 L875 476.2 L877 475.7 L878 477.5 L880 477.7 L883 477.3 L885 476.9 L888 477.3 L890 475.5 L890 600 L420 600Z" fill="#b85000"/>
<path d="M420 526.2 L422 526.7 L424 526.1 L426 525.2 L428 525.6 L430 524.2 L432 524.9 L435 524.7 L436 524.9 L437 525.9 L440 524.9 L442 526.6 L444 525.7 L447 525.2 L449 524.2 L452 525.8 L453 524.5 L455 524.7 L456 524.0 L459 524.6 L462 524.0 L464 526.9 L466 524.4 L468 526.7 L469 524.6 L472 524.6 L474 524.3 L475 526.1 L477 525.0 L480 526.0 L483 525.6 L485 526.4 L486 526.4 L487 524.5 L489 524.6 L490 524.7 L492 525.2 L494 525.0 L495 525.5 L498 524.2 L500 526.1 L503 525.2 L505 523.8 L508 526.3 L510 526.7 L513 525.2 L514 523.8 L517 526.6 L519 525.1 L520 524.6 L522 524.7 L523 524.8 L525 524.6 L526 524.8 L527 524.7 L530 526.8 L532 526.7 L535 526.4 L536 524.1 L538 525.0 L540 523.8 L543 525.7 L545 524.7 L547 524.2 L549 525.3 L551 525.7 L553 526.8 L556 526.2 L558 526.9 L560 526.4 L562 526.6 L564 526.5 L567 525.4 L569 524.7 L570 526.1 L572 526.4 L574 526.7 L576 525.4 L578 525.5 L579 524.1 L581 524.9 L583 525.2 L584 527.0 L586 525.9 L589 526.3 L591 526.2 L594 525.7 L597 524.6 L600 523.9 L602 524.3 L604 525.5 L606 524.8 L608 523.9 L610 524.2 L612 525.5 L615 525.9 L617 524.0 L620 524.0 L622 525.1 L623 526.1 L625 526.9 L628 525.6 L630 526.2 L632 525.7 L635 526.3 L637 524.3 L638 525.7 L639 526.9 L642 524.5 L645 525.0 L647 524.1 L649 527.0 L651 524.1 L653 524.2 L655 524.5 L657 526.2 L658 524.3 L660 524.9 L662 525.3 L664 526.7 L665 526.2 L667 525.4 L669 525.1 L672 524.1 L675 526.2 L678 526.8 L681 525.9 L683 525.8 L685 524.1 L687 526.6 L690 526.5 L692 525.6 L695 524.4 L697 525.9 L698 524.4 L701 524.5 L703 524.4 L705 526.2 L707 523.9 L710 525.8 L712 526.7 L714 524.7 L715 524.3 L716 524.2 L718 525.9 L719 525.0 L721 524.6 L724 524.1 L725 525.1 L726 524.7 L729 524.2 L731 524.2 L732 525.8 L734 526.1 L736 526.5 L738 526.3 L740 526.8 L743 525.5 L746 525.7 L748 524.4 L749 526.6 L750 524.1 L752 524.3 L755 525.0 L757 524.3 L759 526.4 L762 526.7 L763 526.0 L765 526.8 L767 525.6 L769 525.0 L770 526.7 L772 524.4 L774 525.4 L775 525.1 L777 525.1 L778 525.2 L780 523.8 L783 526.6 L784 524.7 L787 526.6 L789 525.2 L790 524.8 L791 524.5 L793 526.6 L795 525.7 L797 524.1 L800 525.4 L802 524.1 L805 526.6 L807 525.4 L808 525.4 L809 525.2 L811 526.5 L812 525.6 L815 523.9 L818 525.9 L820 524.4 L822 526.0 L825 526.4 L827 523.8 L829 526.7 L830 524.5 L832 525.0 L834 524.6 L835 524.8 L837 526.0 L839 526.3 L840 525.1 L842 524.3 L845 524.3 L847 524.5 L849 526.4 L851 526.6 L852 524.7 L854 524.8 L856 527.0 L858 525.7 L861 524.6 L864 526.8 L866 526.3 L868 524.9 L871 526.0 L872 525.2 L874 526.4 L877 526.8 L878 526.1 L881 525.2 L884 526.2 L886 525.8 L887 523.9 L889 525.1 L890 524.7 L890 600 L420 600Z" fill="#8a2528"/>
</g>
<circle cx="444.4" cy="190.5" r="3.4" fill="#0a1040" stroke="#000008" stroke-width="1.2"/><circle cx="444.4" cy="190.5" r="1" fill="#000"/>
<path d="M449.4 190h4" stroke="#3a3a90" stroke-width="0.6" stroke-dasharray="1 1"/>
<circle cx="486.5" cy="190.5" r="3.4" fill="#0a1040" stroke="#000008" stroke-width="1.2"/><circle cx="486.5" cy="190.5" r="1" fill="#000"/>
<path d="M491.5 190h4" stroke="#3a3a90" stroke-width="0.6" stroke-dasharray="1 1"/>
<circle cx="528.6" cy="190.5" r="3.4" fill="#0a1040" stroke="#000008" stroke-width="1.2"/><circle cx="528.6" cy="190.5" r="1" fill="#000"/>
<path d="M533.6 190h4" stroke="#3a3a90" stroke-width="0.6" stroke-dasharray="1 1"/>
<circle cx="570.6" cy="190.5" r="3.4" fill="#0a1040" stroke="#000008" stroke-width="1.2"/><circle cx="570.6" cy="190.5" r="1" fill="#000"/>
<path d="M575.6 190h4" stroke="#3a3a90" stroke-width="0.6" stroke-dasharray="1 1"/>
<circle cx="612.7" cy="190.5" r="3.4" fill="#0a1040" stroke="#000008" stroke-width="1.2"/><circle cx="612.7" cy="190.5" r="1" fill="#000"/>
<path d="M617.7 190h4" stroke="#3a3a90" stroke-width="0.6" stroke-dasharray="1 1"/>
<circle cx="654.8" cy="190.5" r="3.4" fill="#0a1040" stroke="#000008" stroke-width="1.2"/><circle cx="654.8" cy="190.5" r="1" fill="#000"/>
<path d="M659.8 190h4" stroke="#3a3a90" stroke-width="0.6" stroke-dasharray="1 1"/>
<circle cx="696.9" cy="190.5" r="3.4" fill="#0a1040" stroke="#000008" stroke-width="1.2"/><circle cx="696.9" cy="190.5" r="1" fill="#000"/>
<path d="M701.9 190h4" stroke="#3a3a90" stroke-width="0.6" stroke-dasharray="1 1"/>
<circle cx="738.9" cy="190.5" r="3.4" fill="#0a1040" stroke="#000008" stroke-width="1.2"/><circle cx="738.9" cy="190.5" r="1" fill="#000"/>
<path d="M743.9 190h4" stroke="#3a3a90" stroke-width="0.6" stroke-dasharray="1 1"/>
<circle cx="781" cy="190.5" r="3.4" fill="#0a1040" stroke="#000008" stroke-width="1.2"/><circle cx="781" cy="190.5" r="1" fill="#000"/>
<path d="M786 190h4" stroke="#3a3a90" stroke-width="0.6" stroke-dasharray="1 1"/>
<circle cx="823.1" cy="190.5" r="3.4" fill="#0a1040" stroke="#000008" stroke-width="1.2"/><circle cx="823.1" cy="190.5" r="1" fill="#000"/>
<path d="M828.1 190h4" stroke="#3a3a90" stroke-width="0.6" stroke-dasharray="1 1"/>
<circle cx="865.2" cy="190.5" r="3.4" fill="#0a1040" stroke="#000008" stroke-width="1.2"/><circle cx="865.2" cy="190.5" r="1" fill="#000"/>
<path d="M870.2 190h4" stroke="#3a3a90" stroke-width="0.6" stroke-dasharray="1 1"/>
<circle cx="444.4" cy="274.7" r="3.6" fill="#0020e8" stroke="#000020" stroke-width="1.1"/><circle cx="444.4" cy="274.7" r="1" fill="#000"/>
<path d="M449.4 274.5h6" stroke="#2a2a7a" stroke-width="0.6" stroke-dasharray="1 1"/>
<circle cx="486.5" cy="274.7" r="3.6" fill="#0020e8" stroke="#000020" stroke-width="1.1"/><circle cx="486.5" cy="274.7" r="1" fill="#000"/>
<path d="M491.5 274.5h6" stroke="#2a2a7a" stroke-width="0.6" stroke-dasharray="1 1"/>
<circle cx="528.6" cy="274.7" r="3.6" fill="#0020e8" stroke="#000020" stroke-width="1.1"/><circle cx="528.6" cy="274.7" r="1" fill="#000"/>
<path d="M533.6 274.5h6" stroke="#2a2a7a" stroke-width="0.6" stroke-dasharray="1 1"/>
<circle cx="781" cy="274.7" r="3.6" fill="#0020e8" stroke="#000020" stroke-width="1.1"/><circle cx="781" cy="274.7" r="1" fill="#000"/>
<path d="M786 274.5h6" stroke="#2a2a7a" stroke-width="0.6" stroke-dasharray="1 1"/>
<circle cx="823.1" cy="274.7" r="3.6" fill="#0020e8" stroke="#000020" stroke-width="1.1"/><circle cx="823.1" cy="274.7" r="1" fill="#000"/>
<path d="M828.1 274.5h6" stroke="#2a2a7a" stroke-width="0.6" stroke-dasharray="1 1"/>
<circle cx="865.2" cy="274.7" r="3.6" fill="#0020e8" stroke="#000020" stroke-width="1.1"/><circle cx="865.2" cy="274.7" r="1" fill="#000"/>
<path d="M870.2 274.5h6" stroke="#2a2a7a" stroke-width="0.6" stroke-dasharray="1 1"/>
<circle cx="612.9" cy="505.6" r="4.8" fill="#f01010" stroke="#400000" stroke-width="0.8"/><circle cx="612.9" cy="505.6" r="1" fill="#000"/>
<path d="M617.9 505h4" stroke="#3a3a90" stroke-width="0.8"/>
<circle cx="612.9" cy="547.7" r="4.8" fill="#b01a1a" stroke="#200000" stroke-width="0.8"/><circle cx="612.9" cy="547.7" r="1" fill="#000"/>
<path d="M617.9 547h4" stroke="#3a3a90" stroke-width="0.8"/>
<circle cx="654.8" cy="505.6" r="4.8" fill="#f01010" stroke="#400000" stroke-width="0.8"/><circle cx="654.8" cy="505.6" r="1" fill="#000"/>
<path d="M659.8 505h4" stroke="#3a3a90" stroke-width="0.8"/>
<circle cx="654.8" cy="547.7" r="4.8" fill="#b01a1a" stroke="#200000" stroke-width="0.8"/><circle cx="654.8" cy="547.7" r="1" fill="#000"/>
<path d="M659.8 547h4" stroke="#3a3a90" stroke-width="0.8"/>
<circle cx="696.6" cy="505.6" r="4.8" fill="#f01010" stroke="#400000" stroke-width="0.8"/><circle cx="696.6" cy="505.6" r="1" fill="#000"/>
<path d="M701.6 505h4" stroke="#3a3a90" stroke-width="0.8"/>
<circle cx="696.6" cy="547.7" r="4.8" fill="#b01a1a" stroke="#200000" stroke-width="0.8"/><circle cx="696.6" cy="547.7" r="1" fill="#000"/>
<path d="M701.6 547h4" stroke="#3a3a90" stroke-width="0.8"/>
<path d="M866 187l3 -2 1 3z" fill="#e060e0"/>
<circle cx="701" cy="550" r="1.5" fill="#d070ff"/>
</svg>
<svg class="a" style="left:412px;top:545px" width="55" height="50" viewBox="412 545 55 50">
 <defs><linearGradient id="ya" x1="0" y1="0" x2="1" y2="0"><stop offset="0" stop-color="#1010e0"/><stop offset="0.6" stop-color="#b8b8ff"/><stop offset="1" stop-color="#4040f0"/></linearGradient>
 <linearGradient id="xa" x1="0" y1="0" x2="0" y2="1"><stop offset="0" stop-color="#20d020"/><stop offset="0.5" stop-color="#a0f0a0"/><stop offset="1" stop-color="#10b010"/></linearGradient></defs>
 <rect x="422.3" y="572" width="3.4" height="18" fill="url(#ya)"/>
 <path d="M424 559.5L428.2 574H419.8Z" fill="#1818d8"/><path d="M424 562L425.5 573H424Z" fill="#9a9aff"/>
 <rect x="424" y="587.8" width="17" height="3.4" fill="url(#xa)"/>
 <path d="M455 589.5L440 585.5V593.5Z" fill="#18c018"/><path d="M452 589.5L441 588V590Z" fill="#a0f0a0"/>
 <path d="M425 550L428.5 553.5L432 550M428.5 553.5V556.8" fill="none" stroke="#1010e8" stroke-width="2"/>
 <path d="M456 581.5L462 588.7M462 581.5L456 588.7" fill="none" stroke="#10c010" stroke-width="1.8"/>
</svg>
<div class="a" style="left:908px;top:535px;width:98px;height:54px;background:#efefef;border:1px solid #d8d8d8;box-shadow:1px 1px 0 #8a8a8a"></div>
<div class="a" style="left:912px;top:540px;width:1px;height:24px;background:#c8c8c8"></div>
<div class="a" style="left:1001px;top:540px;width:1px;height:24px;background:#c8c8c8"></div>
<div class="t" style="left:918px;top:537px;font-size:8.8px;color:#3a3aa0">X :</div><div class="t" style="left:933px;top:537px;font-size:8.8px;letter-spacing:-0.6px;color:#3a9a3a">1056.57</div>
<div class="t" style="left:917px;top:547px;font-size:8.8px;color:#2a2aa0">Y :</div><div class="t" style="left:933px;top:547px;font-size:8.8px;letter-spacing:-0.6px;color:#4a3ad8">954.39</div>
<div class="t" style="left:918px;top:557px;font-size:8.8px;color:#3a3aa0">Z :</div><div class="t" style="left:933px;top:557px;font-size:8.8px;color:#d05a3a">0</div>
<div class="t" style="left:918px;top:567px;font-size:8.8px;color:#2a2a90">L :</div><div class="t" style="left:933px;top:567px;font-size:8.8px;letter-spacing:-0.6px;color:#2a98b8">1423.79</div>
<div class="t" style="left:915px;top:577px;font-size:8.8px;color:#3a3aa0">Jx</div><div class="t" style="left:933px;top:577px;font-size:8.8px;letter-spacing:-0.6px;color:#2a98b8">42.09</div>

<!-- RIGHT PANELS -->
<div class="a" style="left:1015px;top:123px;width:4px;height:504px;background:#bcd4f0"></div>
<div class="a" style="left:1019px;top:123px;width:161px;height:18px;background:#b8cde6"></div>
<div class="t" style="left:1021px;top:129px;font-size:8.2px;color:#2e4c8c">Структура</div>
<div class="a" style="left:1164px;top:130px;width:3px;height:4px;background:#5a7ab0"></div>
<div class="t" style="left:1172px;top:127px;font-size:9px;color:#5a7ab0;margin-top:1.5px">✕</div>
<div class="a" style="left:1019px;top:141px;width:161px;height:18px;background:linear-gradient(#e8f2fe 0%,#dcebfc 50%,#c4ddf8 85%,#b6d4f6 100%)"></div>
<svg class="a" style="left:1019px;top:141px" width="100" height="18" viewBox="1019 141 100 18">
 <path d="M1026.5 147v9" stroke="#a8b0c0" stroke-width="0.8"/>
 <path d="M1032 147.5l-3 2.5 3.5 2.5-3.5 3" fill="none" stroke="#333" stroke-width="1.1"/><path d="M1029 152.5l2 2" stroke="#777" stroke-width="1.5"/>
 <path d="M1038.5 150.5h3.5l-1.75 2z" fill="#5a7ab0"/>
 <path d="M1045 152l4.5-4.5 4.5 4.5" fill="none" stroke="#333" stroke-width="1.2"/><path d="M1046.5 151.5v5h6v-5z" fill="#bbb" stroke="#333" stroke-width="0.8"/><rect x="1048.5" y="153" width="2" height="2" fill="#eee"/>
 <path d="M1058.5 147.5h6l2 2v7h-8z" fill="#ddd" stroke="#777" stroke-width="0.8"/><path d="M1058 152h9" stroke="#1a6ae8" stroke-width="1.6"/><path d="M1066 150l2.5 2-2.5 2z" fill="#1a6ae8"/>
 <path d="M1071.5 147v10" stroke="#7a98c0"/>
 <rect x="1078.5" y="147.5" width="8" height="9" fill="#555" stroke="#333" stroke-width="0.6"/><path d="M1080 149h5M1080 151h5M1080 153h5" stroke="#ddd" stroke-width="0.8"/><path d="M1078 155h-2v-2" fill="none" stroke="#1a6ae8" stroke-width="1.3"/>
 <path d="M1090.5 147v10" stroke="#7a98c0"/>
 <circle cx="1097.5" cy="153.5" r="2.5" fill="none" stroke="#a8aeb8" stroke-width="1.6"/><circle cx="1103" cy="153.5" r="2.5" fill="none" stroke="#a8aeb8" stroke-width="1.6"/><path d="M1096 150.5h8" stroke="#a8aeb8" stroke-width="1.5"/>
 <path d="M1115.5 149.5a3.5 3.5 0 1 1 -5.5 1.5" fill="none" stroke="#1a6ae8" stroke-width="1.5"/><path d="M1113 146.5l3 3-3.5 1z" fill="#1a6ae8"/><path d="M1110.5 155l-2 -3 3.5 -1z" fill="#1a6ae8"/>
</svg>
<div class="a" style="left:1019px;top:159px;width:161px;height:154px;background:#fff;border-top:1px solid #a8b8cc;border-bottom:1px solid #a8b8cc"></div>
<svg class="a" style="left:1019px;top:158px" width="161" height="80" viewBox="1019 158 161 80">
 <path d="M1028 171V181M1040 185V208M1032.5 168H1034M1044 181H1045M1051 194H1057M1051 208H1056M1062 212V221H1070" stroke="#888" stroke-width="0.8" stroke-dasharray="1 1" fill="none"/>
 <rect x="1024.5" y="164.5" width="7" height="7" fill="#fff" stroke="#999" stroke-width="0.8"/><path d="M1026 168h4" stroke="#555" stroke-width="0.8"/>
 <path d="M1035 166h3v9h-3zM1038 164h3v11h-3zM1041 163h2v12h-2z" fill="#ccd" stroke="#333" stroke-width="0.6"/>
 <rect x="1036.5" y="177.5" width="7" height="7" fill="#fff" stroke="#999" stroke-width="0.8"/><path d="M1038 181h4" stroke="#555" stroke-width="0.8"/>
 <path d="M1046 181l4-4 4 4v5h-8z" fill="#ddd" stroke="#333" stroke-width="0.8"/>
 <rect x="1058" y="190" width="9" height="7" fill="#fff" stroke="#222" stroke-width="1"/>
 <rect x="1047.5" y="204.5" width="7" height="7" fill="#fff" stroke="#999" stroke-width="0.8"/><path d="M1049 208h4" stroke="#555" stroke-width="0.8"/>
 <path d="M1059 203l-1 2 1 2-1 1 1 1-1 2 1 2M1063 203l3 3-3 2 3 2-3 3" fill="none" stroke="#333" stroke-width="0.9"/>
 <path d="M1075 217l2 1h2v6h-2l-2 1-2-1h-2v-6h2z" fill="#b81818" stroke="#301010" stroke-width="0.5"/><rect x="1072" y="219.5" width="6" height="2.5" fill="#fff"/>
</svg>
<div class="t" style="left:1047px;top:163px;font-size:9.3px;color:#111">Tw_17.spf</div>
<div class="t" style="left:1058px;top:176px;font-size:9.3px;color:#111">Здание 1</div>
<div class="t" style="left:1070px;top:189.5px;font-size:9.3px;font-weight:bold;color:#111">1-й этаж</div>
<div class="t" style="left:1070px;top:203.5px;font-size:9.3px;color:#111">Узел</div>
<div class="t" style="left:1082px;top:217px;font-size:9.3px;color:#111">Поперечное сечение</div>
<!-- structure tabs -->
<div class="a" style="left:1019px;top:313px;width:161px;height:21px;background:#c2daf6"></div>
<div class="a" style="left:1020px;top:313px;width:61px;height:17px;border:1px solid #a8c4e4;border-top:none;border-radius:0 0 3px 3px;background:linear-gradient(#fbfcfe,#e6eef8)"></div>
<svg class="a" style="left:1021px;top:315px" width="14" height="13" viewBox="0 0 14 13"><path d="M2 3h3v3h-3zM6 7h3v3h-3zM3 6v3h3M9 2l2 2-2 2" fill="#fff" stroke="#333" stroke-width="0.8"/></svg>
<div class="t" style="left:1035px;top:318px;font-size:8.7px;color:#2a3a7a">Структура</div>
<svg class="a" style="left:1086px;top:315px" width="12" height="13" viewBox="0 0 12 13"><ellipse cx="6" cy="3" rx="4" ry="1.6" fill="#ddd" stroke="#333" stroke-width="0.8"/><path d="M2 3v7q4 2 8 0v-7" fill="#999" stroke="#333" stroke-width="0.8"/><rect x="3" y="5" width="6" height="3" fill="#eee"/></svg>
<div class="t" style="left:1099px;top:318px;font-size:8.5px;color:#2a4a9a">Библиотеки</div>

<!-- VIEWS PANEL -->
<div class="a" style="left:1019px;top:335px;width:161px;height:18px;background:#b8cde6"></div>
<div class="t" style="left:1021px;top:340px;font-size:8.2px;color:#2e4c8c">Виды</div>
<div class="a" style="left:1164px;top:341px;width:3px;height:4px;background:#5a7ab0"></div>
<div class="t" style="left:1172px;top:338px;font-size:9px;color:#5a7ab0;margin-top:1.5px">✕</div>
<div class="a" style="left:1019px;top:353px;width:161px;height:17px;background:linear-gradient(#e8f2fe 0%,#dcebfc 50%,#c4ddf8 85%,#b6d4f6 100%)"></div>
<svg class="a" style="left:1019px;top:353px" width="60" height="17" viewBox="1019 353 60 17">
 <path d="M1024 357h5M1024 359h5M1024 361h3" stroke="#777" stroke-width="0.7"/><circle cx="1029" cy="363" r="2.2" fill="none" stroke="#333" stroke-width="1.3"/>
 <path d="M1034 361l3 3 5-6" fill="none" stroke="#222" stroke-width="1.6"/>
 <path d="M1049 358a3.5 3.5 0 1 1 -1 5" fill="none" stroke="#2a7ae0" stroke-width="1.5"/>
</svg>
<div class="a" style="left:1019px;top:370px;width:161px;height:113px;background:#fff;border-bottom:1px solid #a8b8cc"></div>
<div class="a" style="left:1068px;top:413px;width:96px;height:13px;background:#eeeeee"></div>
<div class="a" style="left:1168px;top:370px;width:12px;height:113px;background:#f0f0f0"></div>
<div class="a" style="left:1169px;top:392px;width:10px;height:62px;background:linear-gradient(90deg,#e4e4e4,#d0d0d0);border:1px solid #b0b0b0;border-radius:2px"></div>
<div class="t" style="left:1170px;top:373px;font-size:7px;color:#555">▲</div>
<div class="t" style="left:1170px;top:472px;font-size:7px;color:#555">▼</div>
<svg class="a" style="left:1019px;top:370px" width="150" height="113" viewBox="1019 370 150 113">
 <path d="M1040.5 370V483M1041 379H1047M1041 392H1047M1045 405H1047M1048 409V419H1057M1041 432H1047M1041 446H1047M1045 459H1047M1048 463V473H1057" stroke="#777" stroke-width="0.8" stroke-dasharray="1 1" fill="none"/>
 <g fill="#fff" stroke="#222" stroke-width="1">
  <path d="M1046.5 375.5h4l1 1h4.5v6.5h-9.5z"/><path d="M1046.5 388.5h4l1 1h4.5v6.5h-9.5z"/><path d="M1046.5 401.5h4l1 1h4.5v6.5h-9.5z"/><path d="M1046.5 428.5h4l1 1h4.5v6.5h-9.5z"/><path d="M1046.5 442.5h4l1 1h4.5v6.5h-9.5z"/><path d="M1046.5 455.5h4l1 1h4.5v6.5h-9.5z"/>
 </g>
 <rect x="1036.5" y="401.5" width="7" height="7" fill="#fff" stroke="#999" stroke-width="0.8"/><path d="M1038 405h4" stroke="#555" stroke-width="0.8"/>
 <rect x="1036.5" y="455.5" width="7" height="7" fill="#fff" stroke="#999" stroke-width="0.8"/><path d="M1038 459h4" stroke="#555" stroke-width="0.8"/>
 <path d="M1058 416h8v6h-8zM1062 422v2" fill="#fff" stroke="#333" stroke-width="1"/>
 <path d="M1058 469l4-2 4 2v5l-4 2-4-2z" fill="#999" stroke="#333" stroke-width="0.8"/>
</svg>
<div class="t" style="left:1059px;top:374px;font-size:9.3px;color:#111">Планы этажей</div>
<div class="t" style="left:1059px;top:387.5px;font-size:9.3px;color:#111">Фасады</div>
<div class="t" style="left:1059px;top:400.5px;font-size:9.3px;color:#111">Конструктор сечений</div>
<div class="t" style="left:1070px;top:414px;font-size:9.3px;color:#111">Поперечное сечение</div>
<div class="t" style="left:1059px;top:427px;font-size:9.3px;color:#111">Разрезы</div>
<div class="t" style="left:1059px;top:441px;font-size:9.3px;color:#111">Сборочные узлы</div>
<div class="t" style="left:1059px;top:454px;font-size:9.3px;color:#111">3D-Виды</div>
<div class="t" style="left:1070px;top:468px;font-size:9.3px;color:#111">Общий вид</div>
<div class="a" style="left:1019px;top:483px;width:161px;height:22px;background:#c2daf6"></div>
<div class="a" style="left:1020px;top:484px;width:28px;height:17px;border:1px solid #a8c4e4;border-top:none;border-radius:0 0 3px 3px;background:linear-gradient(#fbfcfe,#e6eef8)"></div>
<div class="t" style="left:1022px;top:489px;font-size:9px;color:#2a3a7a">Виды</div>
<div class="t" style="left:1055px;top:489px;font-size:9px;color:#2a4a9a">Листы</div>

<!-- PREVIEW PANEL -->
<div class="a" style="left:1019px;top:506px;width:161px;height:17px;background:#b8cde6"></div>
<div class="t" style="left:1021px;top:510px;font-size:8.4px;color:#4a68a0">Предварительный просмотр</div>
<div class="a" style="left:1164px;top:512px;width:3px;height:4px;background:#5a7ab0"></div>
<div class="t" style="left:1172px;top:509px;font-size:9px;color:#5a7ab0;margin-top:1.5px">✕</div>
<div class="a" style="left:1019px;top:523px;width:161px;height:16px;background:linear-gradient(#e8f2fe 0%,#dcebfc 50%,#c4ddf8 85%,#b6d4f6 100%)"></div>
<svg class="a" style="left:1019px;top:523px" width="80" height="16" viewBox="1019 523 80 16">
 <path d="M1022 527h6l2 2v6h-6l-2-2z" fill="#ddd" stroke="#444" stroke-width="0.8"/>
 <rect x="1034" y="529" width="6" height="6" fill="#fff" stroke="#444" stroke-width="0.8"/><rect x="1037" y="527" width="5" height="5" fill="#eee" stroke="#444" stroke-width="0.8"/><text x="1037" y="527" font-size="4" fill="#333">XY</text>
 <path d="M1045 529v6M1053 529v6M1045 533h8" stroke="#333" stroke-width="1"/><text x="1046" y="529" font-size="4" fill="#333">1 2</text>
 <path d="M1056 535h9M1058 532l2.5-5 2.5 5" fill="none" stroke="#333" stroke-width="0.8"/>
 <rect x="1069" y="528" width="8" height="7" fill="#8ac8f0"/><rect x="1069" y="532" width="8" height="3" fill="#c0e0a0"/>
</svg>
<div class="a" style="left:1019px;top:539px;width:161px;height:87px;background:#c0c0c0"></div>
<div class="a" style="left:2px;top:122px;width:1179px;height:1px;background:#fafcff"></div>
<div class="a" style="left:2px;top:123px;width:1179px;height:1px;background:#7aa4dc"></div>
<!-- BOTTOM TOOLBARS -->
<div class="a" style="left:2px;top:626px;width:1179px;height:19px;background:#bddbfc"></div>
<div class="a" style="left:2px;top:626px;width:1179px;height:1px;background:#d4e6fa"></div>
<div class="a" style="left:2px;top:627px;width:262px;height:18px;border-radius:2px;background:linear-gradient(#eaf2fc,#cfe0f4)"></div>
<div class="a" style="left:333px;top:627px;width:494px;height:18px;border-radius:2px;background:linear-gradient(#eaf2fc,#cfe0f4)"></div>
<div class="a" style="left:929px;top:627px;width:79px;height:18px;border-radius:2px;background:linear-gradient(#eaf2fc,#cfe0f4)"></div>
<svg class="a" style="left:2px;top:627px" width="1010" height="18" viewBox="2 627 1010 18">
 <path d="M4 630v1M4 633v1M4 636v1M4 639v1" stroke="#6a88b0" stroke-width="1"/>
 <g fill="url(#ob)" stroke="#d8a050" stroke-width="0.6">
  <rect x="8" y="628.5" width="12" height="13"/><rect x="22" y="628.5" width="12" height="13"/><rect x="35" y="628.5" width="12" height="13"/><rect x="49" y="628.5" width="12" height="13"/><rect x="62" y="628.5" width="12" height="13"/><rect x="80" y="628.5" width="13" height="13"/>
 </g>
 <defs><linearGradient id="ob" x1="0" y1="0" x2="0" y2="1"><stop offset="0" stop-color="#ffe0a0"/><stop offset="0.5" stop-color="#fbb860"/><stop offset="1" stop-color="#ffd890"/></linearGradient></defs>
 <path d="M10 631.5h9M10 635.5h9M10 639h9M10.5 631v9M13.5 631v9M16.5 631v9M18.5 631v9" stroke="#9090b0" stroke-width="0.6"/><path d="M14.5 630v6M11.5 633h6" stroke="#1a6ae0" stroke-width="1.3"/>
 <path d="M24 641l9-7" stroke="#333" stroke-width="0.8" stroke-dasharray="1 1"/><path d="M27 630v6M25.5 631.5l1.5-1.5 1.5 1.5" fill="none" stroke="#1a6ae0" stroke-width="1.3"/>
 <path d="M37 641l9-9M37 641v-10M37 641h9" stroke="#333" stroke-width="0.6" stroke-dasharray="1 1"/><path d="M39 632.5h6M42 630v5.5" stroke="#1a6ae0" stroke-width="1.4"/>
 <path d="M53 630v5M51.5 631.5l1.5-1.5 1.5 1.5" fill="none" stroke="#1a6ae0" stroke-width="1.3"/><circle cx="53" cy="639" r="1.8" fill="none" stroke="#1a6ae0" stroke-width="1.2"/><circle cx="58" cy="634" r="0.9" fill="#222"/>
 <path d="M64 641l9-9" stroke="#1a5ab8" stroke-width="1.1"/><circle cx="66" cy="639" r="1" fill="#1a6ae0"/><circle cx="69" cy="636" r="1" fill="#1a6ae0"/><circle cx="72" cy="633" r="1" fill="#1a6ae0"/>
 <path d="M77 629v12" stroke="#8ab0d8"/>
 <rect x="81.5" y="633.5" width="10" height="6" fill="#e8e8ec" stroke="#333" stroke-width="0.9"/><path d="M84 637v-3q2.5-4 5 0v3" fill="#fff" stroke="#222" stroke-width="1.2"/><path d="M83 641h7" stroke="#333" stroke-width="1"/>
 <rect x="95.5" y="634.5" width="8" height="6" fill="#dde" stroke="#333" stroke-width="0.8"/><rect x="96.5" y="637" width="4" height="3" fill="#3a7ae0"/><path d="M99 634v-2a2 2 0 0 1 4 0v2.5" fill="none" stroke="#333" stroke-width="0.8"/>
 <path d="M110 629v12" stroke="#8ab0d8"/>
 <path d="M115.5 640.5l2-3h7.5l-2 3z" fill="#fff" stroke="#333" stroke-width="0.9"/><path d="M120 636v-5M118.5 632.5l1.5-1.5 1.5 1.5" fill="none" stroke="#1a6ae0" stroke-width="1.2"/>
 <rect x="127" y="628" width="46" height="16" fill="#e8eef6"/>
 <path d="M176.5 630v11" stroke="#6a90c8" stroke-width="1"/><path d="M177.5 630v11" stroke="#fff" stroke-width="0.8"/>
 <path d="M182.5 641l7.5-7.5" stroke="#444" stroke-width="0.9"/><path d="M184.5 638.5l3.5-3.5" stroke="#1a6ae0" stroke-width="2"/>
 <circle cx="201" cy="636.5" r="3.8" fill="#fff" stroke="#333" stroke-width="1"/><path d="M201 634.5l1.3 2-1.3 2-1.3-2z" fill="#1a6ae0"/>
 <path d="M209.5 630v11" stroke="#b0c8e4" stroke-width="0.8"/>
 <path d="M214.5 632v8.5h9" fill="none" stroke="#222" stroke-width="1.1"/><path d="M214.5 634.5h4.5v6" fill="none" stroke="#222" stroke-width="0.9"/>
 <path d="M227.5 630v11" stroke="#b0c8e4" stroke-width="0.8"/>
 <path d="M233 634l3-2 1 0v1h2l1-1v3h-7z" fill="none" stroke="#222" stroke-width="0.9"/><path d="M233 634v7h6" fill="none" stroke="#222" stroke-width="1"/><path d="M238.5 636l4 5M242.5 636l-4 5" stroke="#1a6ae0" stroke-width="1.2"/>
 <path d="M247 634l3-2 1 0v1h2l1-1v3h-7z" fill="none" stroke="#222" stroke-width="0.9"/><path d="M247 634v7h6" fill="none" stroke="#222" stroke-width="1"/><path d="M252.5 636l2 2.5 2-2.5M254.5 638.5v3" fill="none" stroke="#1a6ae0" stroke-width="1.2"/>
 <rect x="259" y="627" width="5" height="18" rx="1" fill="#9cbce4"/><path d="M260 640h3M260 642h3" stroke="#5a7ab0" stroke-width="0.8"/>
 <!-- mid toolbar -->
 <path d="M336 630v1M336 633v1M336 636v1M336 639v1" stroke="#6a88b0"/>
<g opacity="1"><path d="M340.5 632.5l2-2h6v7l-2 2h-6z" fill="#c8c8d0" stroke="#333" stroke-width="0.9"/><path d="M340.5 632.5h6v7h-6z" fill="#f0f0f4" stroke="#333" stroke-width="0.9"/><path d="M346.5 632.5l2-2" stroke="#333" stroke-width="0.9"/></g>
<g opacity="1"><path d="M354.5 632.5l2-2h6v7l-2 2h-6z" fill="#222" stroke="#333" stroke-width="0.9"/><path d="M354.5 632.5h6v7h-6z" fill="#fff" stroke="#333" stroke-width="0.9"/><path d="M360.5 632.5l2-2" stroke="#333" stroke-width="0.9"/></g>
<g opacity="1"><path d="M367.5 632.5l2-2h6v7l-2 2h-6z" fill="#888" stroke="#333" stroke-width="0.9"/><path d="M367.5 632.5h6v7h-6z" fill="#444" stroke="#333" stroke-width="0.9"/><path d="M373.5 632.5l2-2" stroke="#333" stroke-width="0.9"/></g>
<g opacity="1"><path d="M381.5 632.5l2-2h6v7l-2 2h-6z" fill="#9898b8" stroke="#333" stroke-width="0.9"/><path d="M381.5 632.5h6v7h-6z" fill="#e0e0f0" stroke="#333" stroke-width="0.9"/><path d="M387.5 632.5l2-2" stroke="#333" stroke-width="0.9"/></g>
<g opacity="1"><path d="M394.5 632.5l2-2h6v7l-2 2h-6z" fill="#ccc" stroke="#333" stroke-width="0.9"/><path d="M394.5 632.5h6v7h-6z" fill="#fff" stroke="#333" stroke-width="0.9"/><path d="M400.5 632.5l2-2" stroke="#333" stroke-width="0.9"/></g><circle cx="402" cy="639" r="2.2" fill="#fff" stroke="#333" stroke-width="1"/>
<g opacity="1"><path d="M409.5 632.5l2-2h6v7l-2 2h-6z" fill="#dde" stroke="#a0a8b8" stroke-width="0.9"/><path d="M409.5 632.5h6v7h-6z" fill="#f4f4f8" stroke="#a0a8b8" stroke-width="0.9"/><path d="M415.5 632.5l2-2" stroke="#a0a8b8" stroke-width="0.9"/></g>
 <path d="M422.5 629v12" stroke="#8ab0d8"/>
<g opacity="1"><path d="M428.5 632.5l2-2h6v7l-2 2h-6z" fill="#c8d0e0" stroke="#8898b0" stroke-width="0.9"/><path d="M428.5 632.5h6v7h-6z" fill="#e8ecf4" stroke="#8898b0" stroke-width="0.9"/><path d="M434.5 632.5l2-2" stroke="#8898b0" stroke-width="0.9"/></g>
<g opacity="1"><path d="M441.5 632.5l2-2h6v7l-2 2h-6z" fill="#b8d8b8" stroke="#88a890" stroke-width="0.9"/><path d="M441.5 632.5h6v7h-6z" fill="#e8f4e8" stroke="#88a890" stroke-width="0.9"/><path d="M447.5 632.5l2-2" stroke="#88a890" stroke-width="0.9"/></g>
<g opacity="1"><path d="M455.5 632.5l2-2h6v7l-2 2h-6z" fill="#c8d0e0" stroke="#8898b0" stroke-width="0.9"/><path d="M455.5 632.5h6v7h-6z" fill="#e8ecf4" stroke="#8898b0" stroke-width="0.9"/><path d="M461.5 632.5l2-2" stroke="#8898b0" stroke-width="0.9"/></g>
 <path d="M468.5 629v12" stroke="#8ab0d8"/>
 <path d="M476.5 630.5a3 3 0 0 1 3 3q0 1.5-1 2.5v2.5h-4v-2.5q-1-1-1-2.5a3 3 0 0 1 3-3z" fill="none" stroke="#a0a8b8" stroke-width="0.8"/><path d="M475 640.5h3" stroke="#a0a8b8"/>
 <rect x="485.5" y="629.5" width="11" height="12" fill="#c8e4fc" stroke="#7aa8e0" stroke-width="0.8"/><path d="M491 631a3 3 0 0 1 3 3q0 1.5-1 2.5v2.5h-4v-2.5q-1-1-1-2.5a3 3 0 0 1 3-3z" fill="#e8eca0" stroke="#a8a880" stroke-width="0.7"/>
 <path d="M504.5 630.5a3.2 3.2 0 0 1 3.2 3.2q0 1.5-1.2 2.6v2.5h-4v-2.5q-1.2-1.1-1.2-2.6a3.2 3.2 0 0 1 3.2-3.2z" fill="#f8e020" stroke="#555" stroke-width="0.7"/><path d="M502.8 640.5h3.4" stroke="#333" stroke-width="1"/>
 <rect x="513.5" y="634.5" width="6" height="6" fill="#e4e4e8" stroke="#555" stroke-width="0.8"/><path d="M518 634v-2.5a2 2 0 0 1 4 0v2" fill="none" stroke="#555" stroke-width="0.9"/>
 <rect x="526.5" y="632.5" width="9" height="8" fill="#3a7ae0" stroke="#333" stroke-width="0.7"/><path d="M527 635h8M527 637.5h8" stroke="#fff" stroke-width="0.7"/><circle cx="534.5" cy="632" r="2.3" fill="#f0c020" stroke="#777" stroke-width="0.5"/>
 <rect x="538" y="628" width="82" height="16" fill="#fff"/>
 <path d="M622 635h5l-2.5 2.5z" fill="#555"/>
 <path d="M632 631h10v9h-10zM632 634h10M632 637h10" fill="none" stroke="#333" stroke-width="0.8"/>
 <path d="M646 629v12" stroke="#8ab0d8"/>
 <path d="M652 631l2 8 2-8 2 8" fill="none" stroke="#1a4ab0" stroke-width="1"/>
 <rect x="664" y="628" width="81" height="16" fill="#fff"/>
 <path d="M747 635h5l-2.5 2.5z" fill="#555"/>
 <path d="M757 630.5h11l-4 4v6h-3v-6z" fill="#e8eef6" stroke="#555" stroke-width="0.8"/><path d="M757 636v5h4" fill="none" stroke="#1a5ad8" stroke-width="1.3"/>
 <path d="M772 629v12" stroke="#8ab0d8"/>
 <path d="M777 630.5h11l-4 4v6h-3v-6z" fill="#e8eef6" stroke="#555" stroke-width="0.8"/><path d="M776 633l4 7 1-3 3 0z" fill="#1a5ad8"/>
 <path d="M790 630.5h11l-4 4v6h-3v-6z" fill="#e8eef6" stroke="#555" stroke-width="0.8"/><rect x="790" y="634" width="5" height="6" fill="#1a5ad8"/>
 <path d="M804 629v12" stroke="#8ab0d8"/>
 <path d="M808 634l5-4 5 4v6h-10z" fill="#ddd" stroke="#444" stroke-width="0.9"/><path d="M809 637l3 3 5-5" fill="none" stroke="#1a9a2a" stroke-width="1.6"/>
 <rect x="822" y="627" width="5" height="18" fill="#9cbce4"/><path d="M823 640h3M823 642h3" stroke="#5a7ab0" stroke-width="0.8"/>
 <!-- right toolbar -->
 <path d="M932 630v1M932 633v1M932 636v1M932 639v1" stroke="#aac"/>
 <path d="M941 631v11M935.5 636.5h11M939 632.5l2-2 2 2M939 640.5l2 2 2-2M937.5 634.5l-2 2 2 2M944.5 634.5l2 2-2 2" fill="none" stroke="#98a0b0" stroke-width="1"/><rect x="939.5" y="635" width="3" height="3" fill="#c8d0dc" stroke="#8890a0" stroke-width="0.6"/>
 <path d="M958 632a4.5 4.5 0 1 1 -3.5 0" fill="none" stroke="#98a0b0" stroke-width="1.4"/><path d="M957 630l2 2-2 2" fill="none" stroke="#98a0b0" stroke-width="1"/>
 <path d="M965.5 629v12" stroke="#98a8c0"/>
 <path d="M972 631v9M967.5 635.5h9" fill="none" stroke="#a0a8b8" stroke-width="1"/><circle cx="976" cy="640" r="1.3" fill="#5a9ae8"/>
 <path d="M984 631l10 2-8 8z" fill="none" stroke="#a8b0bc" stroke-width="1"/>
 <path d="M998 631l10 2-8 8z" fill="none" stroke="#a8b0bc" stroke-width="1"/><path d="M1000 633l5 1" stroke="#a8b0bc"/>
</svg>
<div class="t" style="left:540px;top:631px;font-size:9px;color:#111">1-й этаж</div>
<div class="t" style="left:666px;top:631px;font-size:8.5px;color:#111">4.Загружение проче</div>

<!-- STATUS BAR -->
<div class="a" style="left:2px;top:645px;width:1179px;height:1px;background:#5e80b0"></div>
<div class="a" style="left:2px;top:646px;width:1178px;height:15px;background:linear-gradient(#dceafa,#c2d8f2)"></div>
<div class="t" style="left:3px;top:649.5px;font-size:8.4px;color:#2a4070">Укажите объект(ы) для редактирования</div>
<div class="a" style="left:853px;top:646px;width:24px;height:15px;background:linear-gradient(#9ab8e0,#86a8d8);border-left:1px solid #f0f6fc"></div>
<div class="a" style="left:878px;top:646px;width:26px;height:15px;background:linear-gradient(#9ab8e0,#86a8d8);border-left:1px solid #c8d8ec"></div>
<div class="t" style="left:856px;top:650px;font-size:8.5px;color:#a4acb4">NUM</div>
<div class="t" style="left:880px;top:650px;font-size:8.5px;color:#a4acb4">ОРТС</div>
<div class="a" style="left:905px;top:646px;width:52px;height:15px;background:#f8f8e6;border-left:1px solid #a8bcd8"></div>
<div class="a" style="left:958px;top:646px;width:53px;height:15px;background:#f8f8e6;border-left:1px solid #a8bcd8"></div>
<div class="a" style="left:1012px;top:646px;width:51px;height:15px;background:#f8f8e6;border-left:1px solid #a8bcd8"></div>
<div class="a" style="left:1064px;top:646px;width:52px;height:15px;background:#f8f8e6;border-left:1px solid #a8bcd8"></div>
<div class="a" style="left:1117px;top:646px;width:52px;height:15px;background:#f8f8e6;border-left:1px solid #a8bcd8"></div>
<div class="t" style="left:906px;top:650px;font-size:9px;color:#3a9a3a">1056.57</div>
<div class="t" style="left:959px;top:650px;font-size:9px;color:#4a2ad0">954.39</div>
<div class="t" style="left:1013px;top:650px;font-size:9px;color:#d04a3a">0</div>
<div class="t" style="left:1066px;top:650px;font-size:9px;color:#2aa0c0">1423.79</div>
<div class="t" style="left:1119px;top:650px;font-size:9px;color:#222">1</div>
<div class="a" style="left:1170px;top:646px;width:11px;height:15px;background:linear-gradient(#a8c4e8,#7ea2d4)"></div>
<div class="a" style="left:0;top:661px;width:1182px;height:1px;background:#4a5260"></div>
<div class="a" style="left:0;top:662px;width:1182px;height:3px;background:#b8d0ec"></div>

<!-- window side borders -->
<div class="a" style="left:0;top:17px;width:1px;height:645px;background:#3a4048"></div>
<div class="a" style="left:1;top:17px;width:1px;height:645px;background:#8a98a8"></div>
<div class="a" style="left:1181px;top:17px;width:1px;height:645px;background:#e8eef6"></div>
</body></html>
